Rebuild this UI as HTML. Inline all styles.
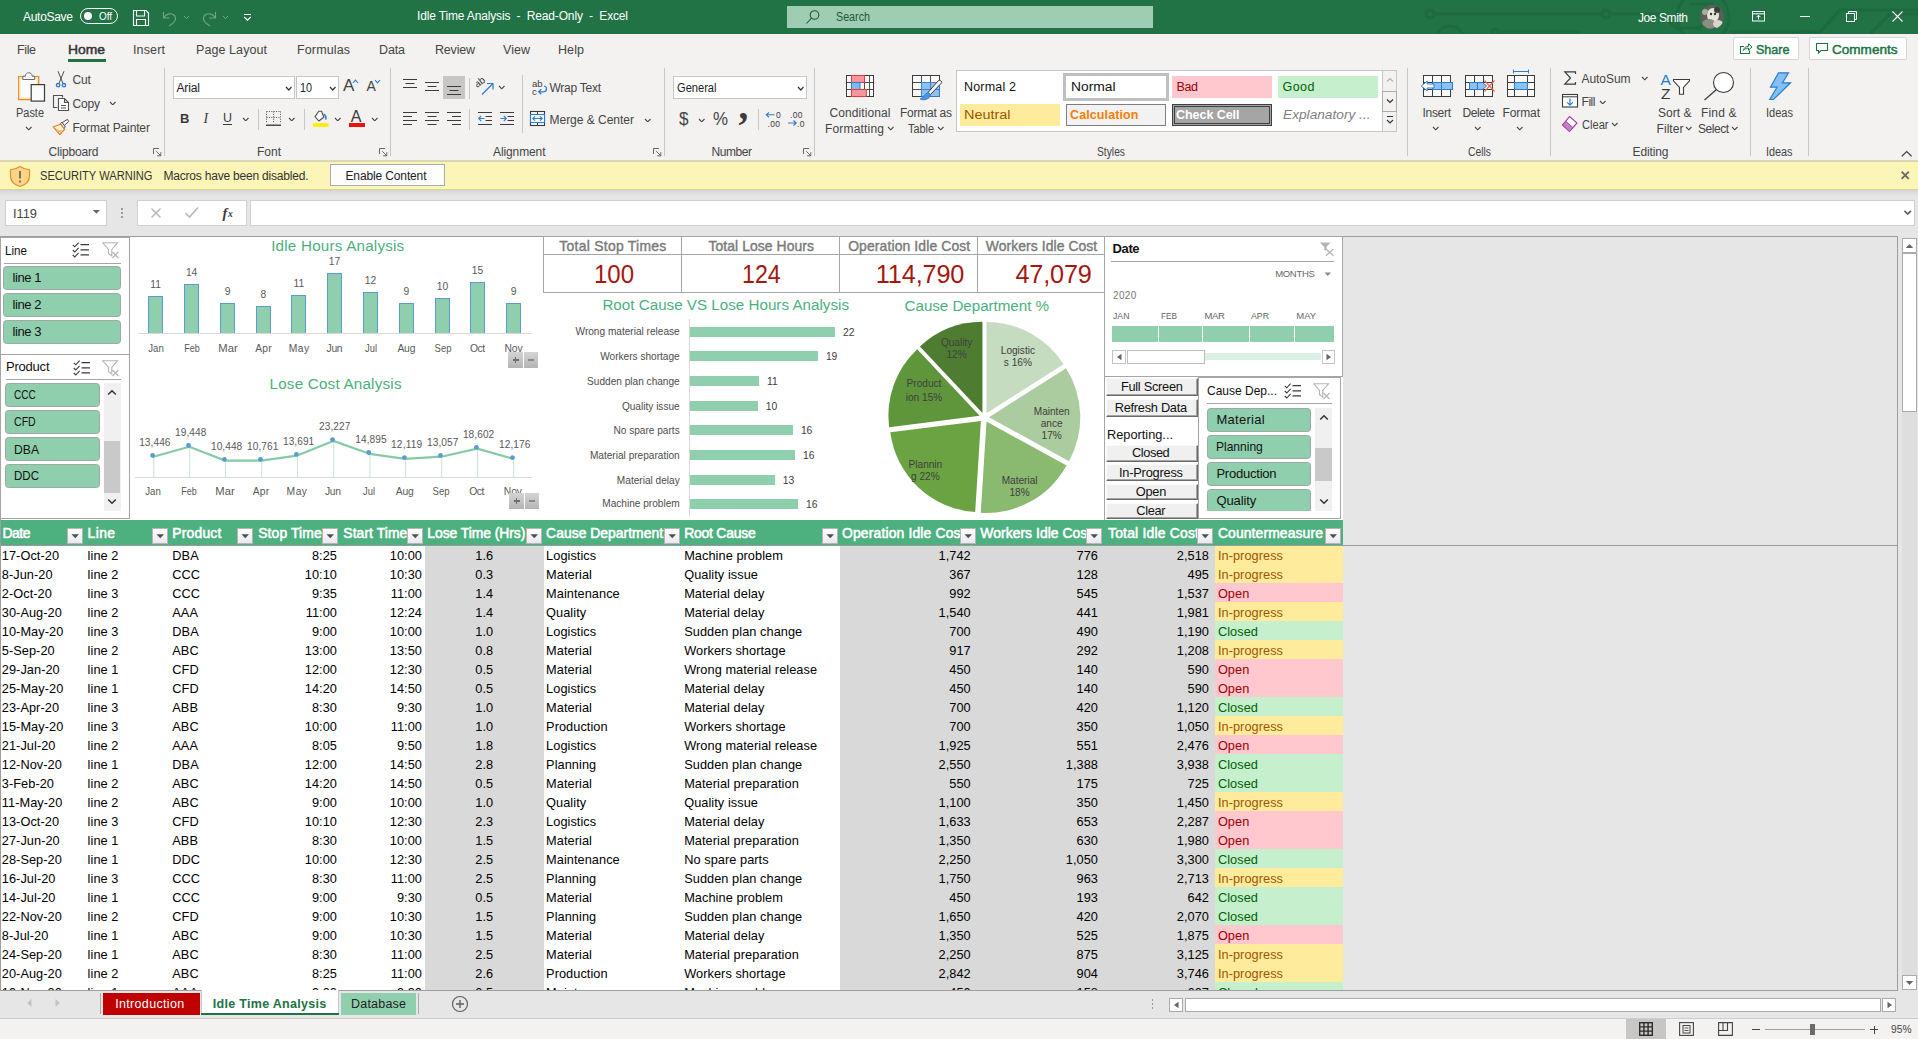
<!DOCTYPE html>
<html><head><meta charset="utf-8"><title>Idle Time Analysis - Excel</title><style>
html,body{margin:0;padding:0;}
body{width:1918px;height:1039px;overflow:hidden;background:#e6e6e6;font-family:"Liberation Sans",sans-serif;position:relative;}
#root{position:absolute;left:0;top:0;width:1918px;height:1039px;overflow:hidden;}
#root div,#root span.t,#root svg{position:absolute;box-sizing:border-box;}
span.t{white-space:pre;}
span.c{font-size:12.75px;line-height:12.75px;letter-spacing:0.06px;}
</style></head><body><div id="root">
<div style="left:0px;top:0px;width:1918px;height:34px;background:#217346;"></div>
<svg style="left:1400px;top:0px;" width="518" height="34" viewBox="0 0 518 34">
<g fill="none" stroke="#1d6a3f" stroke-width="3">
<path d="M30 14 H206"/><circle cx="30" cy="14" r="4" fill="#217346"/><circle cx="206" cy="14" r="4" fill="#217346"/>
<path d="M210 14 H262 L276 28 H300"/>
<circle cx="303" cy="17" r="26"/>
<path d="M290 4 H312 V12 L298 30"/>
<circle cx="50" cy="40" r="14"/><circle cx="95" cy="32" r="3"/><path d="M98 32 H180"/>
<path d="M330 32 H420 L440 10 H518"/><path d="M470 34 L490 14 H518"/>
</g></svg>
<span class="t" style="top:11px;font-size:12px;line-height:12px;color:#fff;letter-spacing:-0.292px;left:23px;">AutoSave</span>
<div style="left:80px;top:8px;width:38px;height:16px;border:1px solid #fff;border-radius:8px;"></div>
<div style="left:84px;top:12px;width:8px;height:8px;background:#fff;border-radius:4px;"></div>
<span class="t" style="top:11px;font-size:11px;line-height:11px;color:#fff;transform:scaleX(0.8975);transform-origin:left center;left:98.5px;">Off</span>
<svg style="left:132px;top:9px;" width="18" height="18" viewBox="0 0 18 18"><path d="M1.5 1.5 H14 L16.5 4 V16.5 H1.5 Z M4.5 1.5 V7 H12.5 V1.5 M4.5 16.5 V10.5 H13.5 V16.5" fill="none" stroke="#fff" stroke-width="1.1"/></svg>
<svg style="left:161px;top:9px;" width="18" height="18" viewBox="0 0 18 18"><path d="M2.5 3 V9 H8.5 M2.8 8.7 C5 4.5 10.5 3.5 13.5 6.5 C16.5 10 13 14 8 17" fill="none" stroke="#6fa688" stroke-width="1.1"/></svg>
<svg style="left:182.5px;top:14.5px;" width="7" height="4.6" viewBox="0 0 7 4.6"><path d="M1 1 L3.5 3.6 L6 1" fill="none" stroke="#6fa688" stroke-width="1"/></svg>
<svg style="left:200px;top:9px;" width="18" height="18" viewBox="0 0 18 18"><path d="M15.5 3 V9 H9.5 M15.2 8.7 C13 4.5 7.5 3.5 4.5 6.5 C1.5 10 5 14 10 17" fill="none" stroke="#6fa688" stroke-width="1.1"/></svg>
<svg style="left:221.5px;top:14.5px;" width="7" height="4.6" viewBox="0 0 7 4.6"><path d="M1 1 L3.5 3.6 L6 1" fill="none" stroke="#6fa688" stroke-width="1"/></svg>
<svg style="left:243px;top:13px;" width="9" height="9" viewBox="0 0 9 9"><path d="M1 1.5 H8 M1.2 4 L4.5 7.2 L7.8 4" fill="none" stroke="#fff" stroke-width="1.1"/></svg>
<span class="t" style="top:10px;font-size:12px;line-height:12px;color:#fff;letter-spacing:-0.156px;left:417px;">Idle Time Analysis  -  Read-Only  -  Excel</span>
<div style="left:787px;top:6px;width:366px;height:22px;background:#9fcdb3;"></div>
<svg style="left:805px;top:9px;" width="16" height="16" viewBox="0 0 16 16"><circle cx="9.5" cy="6" r="4.3" fill="none" stroke="#1e5a38" stroke-width="1.1"/><path d="M6.5 9 L1.5 14.5" stroke="#1e5a38" stroke-width="1.1"/></svg>
<span class="t" style="top:11px;font-size:12px;line-height:12px;color:#1e5a38;transform:scaleX(0.894);transform-origin:left center;left:836px;">Search</span>
<span class="t" style="top:12px;font-size:12px;line-height:12px;color:#fff;letter-spacing:-0.42px;left:1638px;">Joe Smith</span>
<svg style="left:1699px;top:4px;" width="26" height="26" viewBox="0 0 26 26"><defs><clipPath id="av"><circle cx="13" cy="13" r="12"/></clipPath></defs>
<g clip-path="url(#av)"><rect width="26" height="26" fill="#5a5f58"/>
<ellipse cx="14" cy="11" rx="6" ry="7" fill="#e8e4da"/><ellipse cx="10" cy="20" rx="7" ry="5" fill="#8a8f86"/>
<circle cx="18" cy="6" r="3" fill="#3b3f3a"/><circle cx="6" cy="8" r="3" fill="#a9ad9f"/><ellipse cx="19" cy="20" rx="5" ry="4" fill="#d9d5c8"/>
<circle cx="12" cy="10" r="1.2" fill="#333"/><circle cx="16" cy="10" r="1.2" fill="#333"/></g></svg>
<svg style="left:1751px;top:10px;" width="16" height="13" viewBox="0 0 16 13"><rect x="1.5" y="1.5" width="12" height="9.5" fill="none" stroke="#fff" stroke-width="1"/><path d="M1.5 3.8 H13.5 M7.5 9.5 V5.5 M5.5 7.2 L7.5 5.2 L9.5 7.2" fill="none" stroke="#fff" stroke-width="1"/></svg>
<div style="left:1800px;top:16px;width:10px;height:1px;background:#fff;"></div>
<svg style="left:1845px;top:10px;" width="13" height="13" viewBox="0 0 13 13"><rect x="1.5" y="3.5" width="8" height="8" fill="none" stroke="#fff" stroke-width="1"/><path d="M3.5 3.5 V1.5 H11.5 V9.5 H9.5" fill="none" stroke="#fff" stroke-width="1"/></svg>
<svg style="left:1891px;top:10px;" width="13" height="13" viewBox="0 0 13 13"><path d="M1.5 1.5 L11.5 11.5 M11.5 1.5 L1.5 11.5" stroke="#fff" stroke-width="1.1"/></svg>
<div style="left:0px;top:34px;width:1918px;height:127px;background:#f3f2f1;"></div>
<span class="t" style="top:44px;font-size:12.5px;line-height:12.5px;color:#444;letter-spacing:-0.385px;left:17px;">File</span>
<span class="t" style="top:44px;font-size:12.5px;line-height:12.5px;color:#333;transform:scaleX(1.1097);transform-origin:left center;left:68px;-webkit-text-stroke:0.45px #333;">Home</span>
<span class="t" style="top:44px;font-size:12.5px;line-height:12.5px;color:#444;letter-spacing:0.147px;left:133px;">Insert</span>
<span class="t" style="top:44px;font-size:12.5px;line-height:12.5px;color:#444;letter-spacing:0.08px;left:196px;">Page Layout</span>
<span class="t" style="top:44px;font-size:12.5px;line-height:12.5px;color:#444;letter-spacing:0.129px;left:297px;">Formulas</span>
<span class="t" style="top:44px;font-size:12.5px;line-height:12.5px;color:#444;letter-spacing:-0.135px;left:379px;">Data</span>
<span class="t" style="top:44px;font-size:12.5px;line-height:12.5px;color:#444;letter-spacing:-0.2px;left:435px;">Review</span>
<span class="t" style="top:44px;font-size:12.5px;line-height:12.5px;color:#444;letter-spacing:0.042px;left:503px;">View</span>
<span class="t" style="top:44px;font-size:12.5px;line-height:12.5px;color:#444;letter-spacing:0.094px;left:558px;">Help</span>
<div style="left:68px;top:59px;width:38px;height:3px;background:#217346;"></div>
<div style="left:1733px;top:37px;width:66px;height:23px;background:#fff;border:1px solid #d8d6d4;border-radius:2px;"></div>
<svg style="left:1739px;top:42px;" width="14" height="13" viewBox="0 0 14 13"><path d="M5 4.5 H1.5 V11.5 H10.5 V8.5" fill="none" stroke="#217346" stroke-width="1.1"/><path d="M4.5 8.5 C5 5.5 7 4.2 9.5 4.2 V1.8 L13 5 L9.5 8.2 V6 C7.5 6 5.8 6.6 4.5 8.5 Z" fill="none" stroke="#217346" stroke-width="1"/></svg>
<span class="t" style="top:44px;font-size:12.5px;line-height:12.5px;color:#217346;letter-spacing:0.035px;left:1756px;-webkit-text-stroke:0.45px #217346;">Share</span>
<div style="left:1809px;top:37px;width:98px;height:23px;background:#fff;border:1px solid #d8d6d4;border-radius:2px;"></div>
<svg style="left:1815px;top:42px;" width="14" height="13" viewBox="0 0 14 13"><path d="M1.5 1.5 H12.5 V8.5 H6 L3.5 11 V8.5 H1.5 Z" fill="none" stroke="#217346" stroke-width="1.1"/></svg>
<span class="t" style="top:44px;font-size:12.5px;line-height:12.5px;color:#217346;transform:scaleX(1.0838);transform-origin:left center;left:1832px;-webkit-text-stroke:0.45px #217346;">Comments</span>
<div style="left:164px;top:68px;width:1px;height:88px;background:#c8c6c4;"></div>
<div style="left:390px;top:68px;width:1px;height:88px;background:#c8c6c4;"></div>
<div style="left:664px;top:68px;width:1px;height:88px;background:#c8c6c4;"></div>
<div style="left:814px;top:68px;width:1px;height:88px;background:#c8c6c4;"></div>
<div style="left:1407px;top:68px;width:1px;height:88px;background:#c8c6c4;"></div>
<div style="left:1550px;top:68px;width:1px;height:88px;background:#c8c6c4;"></div>
<div style="left:1750px;top:68px;width:1px;height:88px;background:#c8c6c4;"></div>
<div style="left:1808px;top:68px;width:1px;height:88px;background:#c8c6c4;"></div>
<span class="t" style="top:146px;font-size:12px;line-height:12px;color:#444;letter-spacing:-0.172px;left:48.5px;">Clipboard</span>
<span class="t" style="top:146px;font-size:12px;line-height:12px;color:#444;letter-spacing:-0.005px;left:257px;">Font</span>
<span class="t" style="top:146px;font-size:12px;line-height:12px;color:#444;letter-spacing:-0.109px;left:493px;">Alignment</span>
<span class="t" style="top:146px;font-size:12px;line-height:12px;color:#444;letter-spacing:-0.438px;left:711.5px;">Number</span>
<span class="t" style="top:146px;font-size:12px;line-height:12px;color:#444;transform:scaleX(0.8566);transform-origin:left center;left:1096.5px;">Styles</span>
<span class="t" style="top:146px;font-size:12px;line-height:12px;color:#444;transform:scaleX(0.8623);transform-origin:left center;left:1467.5px;">Cells</span>
<span class="t" style="top:146px;font-size:12px;line-height:12px;color:#444;letter-spacing:-0.117px;left:1632.5px;">Editing</span>
<span class="t" style="top:146px;font-size:12px;line-height:12px;color:#444;transform:scaleX(0.9026);transform-origin:left center;left:1766px;">Ideas</span>
<svg style="left:153px;top:148px;" width="9" height="9" viewBox="0 0 9 9"><path d="M0.5 6 V0.5 H6 M3.2 3.2 L7.8 7.8 M7.8 4.2 V7.8 H4.2" fill="none" stroke="#666" stroke-width="1"/></svg>
<svg style="left:379px;top:148px;" width="9" height="9" viewBox="0 0 9 9"><path d="M0.5 6 V0.5 H6 M3.2 3.2 L7.8 7.8 M7.8 4.2 V7.8 H4.2" fill="none" stroke="#666" stroke-width="1"/></svg>
<svg style="left:653px;top:148px;" width="9" height="9" viewBox="0 0 9 9"><path d="M0.5 6 V0.5 H6 M3.2 3.2 L7.8 7.8 M7.8 4.2 V7.8 H4.2" fill="none" stroke="#666" stroke-width="1"/></svg>
<svg style="left:803px;top:148px;" width="9" height="9" viewBox="0 0 9 9"><path d="M0.5 6 V0.5 H6 M3.2 3.2 L7.8 7.8 M7.8 4.2 V7.8 H4.2" fill="none" stroke="#666" stroke-width="1"/></svg>
<svg style="left:1900px;top:150px;" width="13" height="8" viewBox="0 0 13 8"><path d="M1.8 6.3 L6.7 1.5 L11.6 6.3" fill="none" stroke="#444" stroke-width="1.2"/></svg>
<svg style="left:16px;top:70px;" width="31" height="34" viewBox="0 0 31 34"><rect x="2.7" y="6.6" width="20" height="23" fill="#fbfbfb" stroke="#e8912d" stroke-width="1.3"/>
<rect x="4" y="7.9" width="17.4" height="20.4" fill="none" stroke="#fbe2b0" stroke-width="1.2"/>
<path d="M6.8 9.5 V6.2 H9.3 C9.3 1.6 16.2 1.6 16.2 6.2 H18.7 V9.5 Z" fill="#f8f8f8" stroke="#6a6a6a" stroke-width="1"/>
<rect x="15.2" y="14.6" width="13.3" height="16.5" fill="#fbfbfb" stroke="#3b3b3b" stroke-width="1.2"/></svg>
<span class="t" style="top:107px;font-size:12px;line-height:12px;color:#444;transform:scaleX(0.9124);transform-origin:left center;left:15.5px;">Paste</span>
<svg style="left:24.5px;top:126px;" width="7.5" height="4.8" viewBox="0 0 7.5 4.8"><path d="M1 1 L3.75 3.8 L6.5 1" fill="none" stroke="#444" stroke-width="1.1"/></svg>
<svg style="left:54px;top:70px;" width="14" height="19" viewBox="0 0 14 19"><path d="M4 1.2 L8.8 13 M10 1.2 L5.2 13" stroke="#505050" stroke-width="1" fill="none"/>
<circle cx="4.1" cy="15.2" r="1.7" fill="none" stroke="#2b7cd3" stroke-width="1.3"/><circle cx="9.9" cy="15.2" r="1.7" fill="none" stroke="#2b7cd3" stroke-width="1.3"/></svg>
<span class="t" style="top:74px;font-size:12px;line-height:12px;color:#444;letter-spacing:-0.094px;left:72.4px;">Cut</span>
<svg style="left:52px;top:94px;" width="18" height="18" viewBox="0 0 18 18"><path d="M10.5 3.5 V1.5 H1.5 V13.5 H5.5" fill="none" stroke="#505050" stroke-width="1.1"/>
<path d="M6.5 4.5 H12.5 L16.5 8.5 V16.5 H6.5 Z M12.5 4.5 V8.5 H16.5" fill="#fff" stroke="#505050" stroke-width="1.1"/><path d="M9 11.5 H14 M9 14 H14" stroke="#505050" stroke-width="1"/></svg>
<span class="t" style="top:98px;font-size:12px;line-height:12px;color:#444;letter-spacing:-0.172px;left:72.4px;">Copy</span>
<svg style="left:109.3px;top:100.7px;" width="7.5" height="4.8" viewBox="0 0 7.5 4.8"><path d="M1 1 L3.75 3.8 L6.5 1" fill="none" stroke="#444" stroke-width="1.1"/></svg>
<svg style="left:52px;top:117px;" width="19" height="19" viewBox="0 0 19 19"><path d="M9.3 6.2 L15.5 2.3 L16.6 4.5 L11.5 9.3" fill="#f8f8f8" stroke="#505050" stroke-width="1"/>
<path d="M8.2 6.6 L10 5.4 L13.4 10 L11.8 11.4 Z" fill="#f8f8f8" stroke="#505050" stroke-width="1"/>
<path d="M1.3 9.8 L8.6 7.2 L12.6 12.3 L7.8 17.6 Z" fill="#fdf3e6" stroke="#e8801a" stroke-width="1.2" stroke-linejoin="round"/>
<path d="M3.5 11.5 L9 15.5 M5 14.5 L10.5 13.5" stroke="#f0a050" stroke-width="0.9"/></svg>
<span class="t" style="top:122px;font-size:12px;line-height:12px;color:#444;letter-spacing:-0.143px;left:72.4px;">Format Painter</span>
<div style="left:173px;top:76px;width:122px;height:23px;background:#fff;border:1px solid #c6c6c6;"></div>
<span class="t" style="top:82px;font-size:12px;line-height:12px;color:#222;letter-spacing:-0.129px;left:176.5px;">Arial</span>
<svg style="left:285px;top:85.5px;" width="7.5" height="5" viewBox="0 0 7.5 5"><path d="M1 1 L3.75 4 L6.5 1" fill="none" stroke="#333" stroke-width="1.2"/></svg>
<div style="left:296px;top:76px;width:43px;height:23px;background:#fff;border:1px solid #c6c6c6;"></div>
<span class="t" style="top:82px;font-size:12px;line-height:12px;color:#222;transform:scaleX(0.8982);transform-origin:left center;left:299.5px;">10</span>
<svg style="left:328.5px;top:85.5px;" width="7.5" height="5" viewBox="0 0 7.5 5"><path d="M1 1 L3.75 4 L6.5 1" fill="none" stroke="#333" stroke-width="1.2"/></svg>
<span class="t" style="top:77px;font-size:17px;line-height:17px;color:#444;left:343px;">A</span>
<svg style="left:352px;top:78.5px;" width="7" height="5" viewBox="0 0 7 5"><path d="M1 4 L3.5 1.2 L6 4" fill="none" stroke="#2b7cd3" stroke-width="1.1"/></svg>
<span class="t" style="top:79px;font-size:14px;line-height:14px;color:#444;left:366.5px;">A</span>
<svg style="left:374px;top:78.5px;" width="7" height="5" viewBox="0 0 7 5"><path d="M1 1 L3.5 3.8 L6 1" fill="none" stroke="#2b7cd3" stroke-width="1.1"/></svg>
<span class="t" style="top:112px;font-size:13px;line-height:13px;color:#3b3b3b;font-weight:bold;left:180px;">B</span>
<span class="t" style="top:112px;font-size:13px;line-height:13px;color:#3b3b3b;font-style:italic;left:203.5px;font-family:'Liberation Serif',serif;font-size:14px;">I</span>
<span class="t" style="top:112px;font-size:12.5px;line-height:12.5px;color:#3b3b3b;left:223px;">U</span>
<div style="left:223px;top:124px;width:9px;height:1px;background:#3b3b3b;"></div>
<svg style="left:242px;top:116.5px;" width="7.5" height="4.8" viewBox="0 0 7.5 4.8"><path d="M1 1 L3.75 3.8 L6.5 1" fill="none" stroke="#444" stroke-width="1.1"/></svg>
<div style="left:258px;top:109px;width:1px;height:21px;background:#c8c6c4;"></div>
<svg style="left:265px;top:110px;" width="17" height="17" viewBox="0 0 17 17"><path d="M1.5 1.5 H15.5 M1.5 1.5 V13 M15.5 1.5 V13 M8.5 1.5 V13 M1.5 7.5 H15.5" fill="none" stroke="#555" stroke-width="1" stroke-dasharray="1 1.4"/><path d="M1 15.2 H16" stroke="#222" stroke-width="1.2"/></svg>
<svg style="left:288px;top:116.5px;" width="7.5" height="4.8" viewBox="0 0 7.5 4.8"><path d="M1 1 L3.75 3.8 L6.5 1" fill="none" stroke="#444" stroke-width="1.1"/></svg>
<div style="left:304px;top:109px;width:1px;height:21px;background:#c8c6c4;"></div>
<svg style="left:312px;top:109px;" width="17" height="18" viewBox="0 0 17 18"><path d="M3 7.6 L6.8 2.2 H9.6 L11.8 8.2 L6.8 12 Z" fill="#fbfbfb" stroke="#505050" stroke-width="1.1" stroke-linejoin="round"/>
<path d="M11.6 5.2 C13.8 6.2 14.2 8.5 13.6 10.6" fill="none" stroke="#2b7cd3" stroke-width="1.5"/><rect x="1" y="14.2" width="15.5" height="3.6" fill="#ffee00"/></svg>
<svg style="left:334px;top:116.5px;" width="7.5" height="4.8" viewBox="0 0 7.5 4.8"><path d="M1 1 L3.75 3.8 L6.5 1" fill="none" stroke="#444" stroke-width="1.1"/></svg>
<span class="t" style="top:109px;font-size:16px;line-height:16px;color:#3b3b3b;left:350.8px;">A</span>
<div style="left:349px;top:123.2px;width:16px;height:3.6px;background:#ee1111;"></div>
<svg style="left:371px;top:116.5px;" width="7.5" height="4.8" viewBox="0 0 7.5 4.8"><path d="M1 1 L3.75 3.8 L6.5 1" fill="none" stroke="#444" stroke-width="1.1"/></svg>
<svg style="left:403px;top:76px;" width="14" height="22" viewBox="0 0 14 22"><rect x="0.0" y="3" width="14" height="1" fill="#3b3b3b"/><rect x="2.5" y="7" width="9" height="1" fill="#3b3b3b"/><rect x="0.0" y="11" width="14" height="1" fill="#3b3b3b"/></svg>
<svg style="left:425px;top:76px;" width="14" height="22" viewBox="0 0 14 22"><rect x="0.0" y="6" width="14" height="1" fill="#3b3b3b"/><rect x="2.5" y="10" width="9" height="1" fill="#3b3b3b"/><rect x="0.0" y="14" width="14" height="1" fill="#3b3b3b"/></svg>
<div style="left:443px;top:76px;width:22px;height:23px;background:#c8c6c4;"></div>
<svg style="left:447px;top:76px;" width="14" height="22" viewBox="0 0 14 22"><rect x="0.0" y="10" width="14" height="1" fill="#3b3b3b"/><rect x="2.5" y="14" width="9" height="1" fill="#3b3b3b"/><rect x="0.0" y="18" width="14" height="1" fill="#3b3b3b"/></svg>
<div style="left:469px;top:78px;width:1px;height:21px;background:#c8c6c4;"></div>
<svg style="left:476px;top:76px;" width="19" height="21" viewBox="0 0 19 21"><text x="0" y="9" font-size="10" font-family="Liberation Sans" fill="#3b3b3b" transform="rotate(-36 5 9)">ab</text>
<path d="M6 18.5 L16.5 8 M11 7.5 H17 V13.5" fill="none" stroke="#2b7cd3" stroke-width="1.2"/></svg>
<svg style="left:497.5px;top:85px;" width="7.5" height="4.8" viewBox="0 0 7.5 4.8"><path d="M1 1 L3.75 3.8 L6.5 1" fill="none" stroke="#444" stroke-width="1.1"/></svg>
<div style="left:522px;top:75px;width:1px;height:58px;background:#c8c6c4;"></div>
<svg style="left:531px;top:78px;" width="17" height="18" viewBox="0 0 17 18"><text x="1" y="8.5" font-size="9.5" font-family="Liberation Sans" fill="#3b3b3b">ab</text><text x="1" y="16.5" font-size="9.5" font-family="Liberation Sans" fill="#3b3b3b">c</text>
<path d="M13 8 C16.5 8.5 16.5 13.5 12.5 13.8 H8 M10.3 11.3 L7.6 13.8 L10.3 16.3" fill="none" stroke="#2b7cd3" stroke-width="1.2"/></svg>
<span class="t" style="top:82px;font-size:12px;line-height:12px;color:#444;letter-spacing:-0.26px;left:549.5px;">Wrap Text</span>
<svg style="left:403px;top:110px;" width="14" height="17" viewBox="0 0 14 17"><rect x="0" y="2" width="14" height="1" fill="#3b3b3b"/><rect x="0" y="6" width="9" height="1" fill="#3b3b3b"/><rect x="0" y="10" width="14" height="1" fill="#3b3b3b"/><rect x="0" y="14" width="9" height="1" fill="#3b3b3b"/></svg>
<svg style="left:425px;top:110px;" width="14" height="17" viewBox="0 0 14 17"><rect x="0.0" y="2" width="14" height="1" fill="#3b3b3b"/><rect x="2.5" y="6" width="9" height="1" fill="#3b3b3b"/><rect x="0.0" y="10" width="14" height="1" fill="#3b3b3b"/><rect x="2.5" y="14" width="9" height="1" fill="#3b3b3b"/></svg>
<svg style="left:447px;top:110px;" width="14" height="17" viewBox="0 0 14 17"><rect x="0" y="2" width="14" height="1" fill="#3b3b3b"/><rect x="5" y="6" width="9" height="1" fill="#3b3b3b"/><rect x="0" y="10" width="14" height="1" fill="#3b3b3b"/><rect x="5" y="14" width="9" height="1" fill="#3b3b3b"/></svg>
<div style="left:469px;top:109px;width:1px;height:21px;background:#c8c6c4;"></div>
<svg style="left:477.5px;top:110px;" width="15" height="17" viewBox="0 0 15 17"><rect x="0" y="2" width="14" height="1" fill="#3b3b3b"/><rect x="0" y="14" width="14" height="1" fill="#3b3b3b"/><rect x="7.5" y="6" width="6.5" height="1" fill="#3b3b3b"/><rect x="7.5" y="10" width="6.5" height="1" fill="#3b3b3b"/><path d="M6.5 8.5 H0.8 M3.2 5.9 L0.7 8.5 L3.2 11.1" fill="none" stroke="#2b7cd3" stroke-width="1.1"/></svg>
<svg style="left:499.5px;top:110px;" width="15" height="17" viewBox="0 0 15 17"><rect x="0" y="2" width="14" height="1" fill="#3b3b3b"/><rect x="0" y="14" width="14" height="1" fill="#3b3b3b"/><rect x="7.5" y="6" width="6.5" height="1" fill="#3b3b3b"/><rect x="7.5" y="10" width="6.5" height="1" fill="#3b3b3b"/><path d="M0.5 8.5 H6.2 M3.8 5.9 L6.3 8.5 L3.8 11.1" fill="none" stroke="#2b7cd3" stroke-width="1.1"/></svg>
<svg style="left:529px;top:110px;" width="17" height="17" viewBox="0 0 17 17"><rect x="1.5" y="1.5" width="14" height="14" fill="#fbfbfb" stroke="#3b3b3b" stroke-width="1.1"/><path d="M8.5 1.5 V4.5 M8.5 12.5 V15.5" stroke="#3b3b3b" stroke-width="1"/>
<rect x="1.5" y="4.5" width="14" height="8" fill="#fbfbfb" stroke="#2b7cd3" stroke-width="1.1"/><path d="M4 8.5 H13 M6 6.4 L3.8 8.5 L6 10.6 M11 6.4 L13.2 8.5 L11 10.6" fill="none" stroke="#2b7cd3" stroke-width="1.1"/></svg>
<span class="t" style="top:114px;font-size:12px;line-height:12px;color:#444;letter-spacing:-0.016px;left:549.5px;">Merge &amp; Center</span>
<svg style="left:644px;top:117.5px;" width="7.5" height="4.8" viewBox="0 0 7.5 4.8"><path d="M1 1 L3.75 3.8 L6.5 1" fill="none" stroke="#444" stroke-width="1.1"/></svg>
<div style="left:673px;top:76px;width:134px;height:23px;background:#fff;border:1px solid #c6c6c6;"></div>
<span class="t" style="top:82px;font-size:12px;line-height:12px;color:#222;transform:scaleX(0.925);transform-origin:left center;left:676.5px;">General</span>
<svg style="left:796.5px;top:85.5px;" width="7.5" height="5" viewBox="0 0 7.5 5"><path d="M1 1 L3.75 4 L6.5 1" fill="none" stroke="#333" stroke-width="1.2"/></svg>
<span class="t" style="top:111px;font-size:17.5px;line-height:17.5px;color:#444;transform:scaleX(0.9759);transform-origin:left center;left:679px;">$</span>
<svg style="left:697.5px;top:117.5px;" width="7.5" height="4.8" viewBox="0 0 7.5 4.8"><path d="M1 1 L3.75 3.8 L6.5 1" fill="none" stroke="#444" stroke-width="1.1"/></svg>
<span class="t" style="top:111px;font-size:17.5px;line-height:17.5px;color:#444;transform:scaleX(0.9639);transform-origin:left center;left:713px;">%</span>
<span class="t" style="top:86px;font-size:39px;line-height:39px;color:#3b3b3b;font-weight:bold;left:738.5px;font-family:'Liberation Serif',serif;">,</span>
<div style="left:758px;top:109px;width:1px;height:21px;background:#c8c6c4;"></div>
<svg style="left:765px;top:110px;" width="18" height="18" viewBox="0 0 18 18"><text x="11" y="8" font-size="8.5" font-family="Liberation Sans" fill="#3b3b3b">0</text><text x="2.5" y="16.5" font-size="8.5" font-family="Liberation Sans" fill="#3b3b3b" letter-spacing="0.3">.00</text>
<path d="M9.5 4.8 H1.5 M4 2.3 L1.3 4.8 L4 7.3" fill="none" stroke="#2b7cd3" stroke-width="1.1"/></svg>
<svg style="left:787px;top:110px;" width="18" height="18" viewBox="0 0 18 18"><text x="3" y="8" font-size="8.5" font-family="Liberation Sans" fill="#3b3b3b" letter-spacing="0.3">.00</text><text x="10" y="16.5" font-size="8.5" font-family="Liberation Sans" fill="#3b3b3b" letter-spacing="0.3">.0</text>
<path d="M1 13 H9 M6.5 10.5 L9.2 13 L6.5 15.5" fill="none" stroke="#2b7cd3" stroke-width="1.1"/></svg>
<svg style="left:845px;top:74px;" width="30" height="24" viewBox="0 0 30 24"><rect x="1.5" y="1.5" width="27" height="21" fill="#fbfbfb" stroke="#3b3b3b" stroke-width="1"/>
<path d="M6.5 1.5 V22.5 M19.5 1.5 V22.5 M24.5 1.5 V22.5 M1.5 8.5 H28.5 M1.5 15.5 H28.5" stroke="#3b3b3b" stroke-width="0.9" fill="none"/>
<rect x="6.5" y="1.5" width="13" height="7" fill="#f7979d" stroke="#e23d3d" stroke-width="1"/><rect x="6.5" y="8.5" width="8.5" height="7" fill="#7fbaec" stroke="#2b7cd3" stroke-width="1"/><rect x="6.5" y="15.5" width="14.8" height="7" fill="#f7979d" stroke="#e23d3d" stroke-width="1"/></svg>
<span class="t" style="top:107px;font-size:12px;line-height:12px;color:#444;letter-spacing:0.095px;left:829.5px;">Conditional</span>
<span class="t" style="top:123px;font-size:12px;line-height:12px;color:#444;letter-spacing:0.182px;left:825px;">Formatting</span>
<svg style="left:887px;top:126px;" width="7.5" height="4.8" viewBox="0 0 7.5 4.8"><path d="M1 1 L3.75 3.8 L6.5 1" fill="none" stroke="#444" stroke-width="1.1"/></svg>
<svg style="left:911px;top:74px;" width="33" height="30" viewBox="0 0 33 30"><rect x="1.5" y="1.5" width="27" height="21" fill="#fbfbfb" stroke="#3b3b3b" stroke-width="1"/>
<rect x="10.5" y="8.5" width="18" height="14" fill="#8ec1f0"/>
<path d="M10.5 1.5 V8.5 M19.5 1.5 V8.5 M1.5 8.5 H10.5 M1.5 15.5 H10.5" stroke="#3b3b3b" stroke-width="0.9" fill="none"/>
<path d="M10.5 8.5 H28.5 M10.5 15.5 H28.5 M10.5 8.5 V22.5 M19.5 8.5 V22.5 M28.5 8.5 V22.5 M10.5 22.5 H28.5" stroke="#2b7cd3" stroke-width="0.9" fill="none"/>
<path d="M30.3 9.2 L19.5 20.5 L17 18.5 L27.2 6.8 C28.8 5.3 31.8 7.6 30.3 9.2 Z" fill="#f3f2f1" stroke="#3b3b3b" stroke-width="1"/>
<path d="M16.8 18.3 L19.7 20.7 C19 24.8 13.5 27.3 9 25 C12 24 13 20.8 16.8 18.3 Z" fill="#4a94de" stroke="#2b7cd3" stroke-width="0.8"/></svg>
<span class="t" style="top:107px;font-size:12px;line-height:12px;color:#444;letter-spacing:-0.252px;left:900px;">Format as</span>
<span class="t" style="top:123px;font-size:12px;line-height:12px;color:#444;transform:scaleX(0.9063);transform-origin:left center;left:907.5px;">Table</span>
<svg style="left:937px;top:126px;" width="7.5" height="4.8" viewBox="0 0 7.5 4.8"><path d="M1 1 L3.75 3.8 L6.5 1" fill="none" stroke="#444" stroke-width="1.1"/></svg>
<div style="left:956px;top:70px;width:441px;height:62px;background:#fff;border:1px solid #c6c6c6;"></div>
<span class="t" style="top:81px;font-size:12.5px;line-height:12.5px;color:#111;letter-spacing:0.183px;left:964px;">Normal 2</span>
<div style="left:1063px;top:73px;width:106px;height:28px;background:#fff;border:3px solid #c0c0c0;"></div>
<span class="t" style="top:81px;font-size:12.5px;line-height:12.5px;color:#111;transform:scaleX(1.1043);transform-origin:left center;left:1070.5px;">Normal</span>
<div style="left:1172px;top:76px;width:100px;height:22px;background:#ffc7ce;"></div>
<span class="t" style="top:81px;font-size:12.5px;line-height:12.5px;color:#9c0006;letter-spacing:-0.375px;left:1176.5px;">Bad</span>
<div style="left:1278px;top:76px;width:100px;height:22px;background:#c6efce;"></div>
<span class="t" style="top:81px;font-size:12.5px;line-height:12.5px;color:#006100;letter-spacing:0.469px;left:1282.5px;">Good</span>
<div style="left:960px;top:104px;width:100px;height:22px;background:#ffeb9c;"></div>
<span class="t" style="top:109px;font-size:12.5px;line-height:12.5px;color:#9c5700;transform:scaleX(1.1539);transform-origin:left center;left:964px;">Neutral</span>
<div style="left:1066px;top:104px;width:100px;height:22px;background:#f2f2f2;border:1px solid #7f7f7f;"></div>
<span class="t" style="top:109px;font-size:12.5px;line-height:12.5px;color:#fa7d00;font-weight:bold;letter-spacing:0.113px;left:1070px;">Calculation</span>
<div style="left:1172px;top:104px;width:100px;height:22px;background:#a5a5a5;border:3px double #3f3f3f;"></div>
<span class="t" style="top:109px;font-size:12.5px;line-height:12.5px;color:#fff;font-weight:bold;letter-spacing:-0.047px;left:1176px;">Check Cell</span>
<span class="t" style="top:109px;font-size:12.5px;line-height:12.5px;color:#7f7f7f;font-style:italic;transform:scaleX(1.095);transform-origin:left center;left:1282.5px;">Explanatory ...</span>
<div style="left:1382px;top:70px;width:15px;height:62px;background:#f3f2f1;border:1px solid #c6c6c6;"></div>
<div style="left:1382px;top:91px;width:15px;height:21px;background:#f3f2f1;border:1px solid #ababab;"></div>
<svg style="left:1386px;top:77px;" width="8" height="6" viewBox="0 0 8 6"><path d="M1 4.5 L4 1.5 L7 4.5" fill="none" stroke="#b0b0b0" stroke-width="1.1"/></svg>
<svg style="left:1386px;top:98px;" width="8" height="6" viewBox="0 0 8 6"><path d="M1 1.5 L4 4.5 L7 1.5" fill="none" stroke="#333" stroke-width="1.2"/></svg>
<svg style="left:1386px;top:115px;" width="8" height="10" viewBox="0 0 8 10"><path d="M1 1.5 H7 M1 5 L4 8 L7 5" fill="none" stroke="#333" stroke-width="1.1"/></svg>
<svg style="left:1420px;top:74px;" width="35" height="24" viewBox="0 0 35 24"><rect x="3.5" y="1.5" width="27" height="21" fill="#fbfbfb" stroke="#3b3b3b" stroke-width="1"/><path d="M3.5 8.5 H30.5 M3.5 15.5 H30.5 M12.5 1.5 V22.5 M21.5 1.5 V22.5" stroke="#3b3b3b" stroke-width="1"/><rect x="12.5" y="8.5" width="20" height="7" fill="#8ec1f0" stroke="#2b7cd3" stroke-width="1"/><path d="M21.5 8.5 V15.5" stroke="#2b7cd3" stroke-width="1"/>
<path d="M14 10 H7.2 V7.2 L1.2 12 L7.2 16.8 V14 H14 Z" fill="#fbfbfb" stroke="#2b7cd3" stroke-width="1"/></svg>
<span class="t" style="top:107px;font-size:12px;line-height:12px;color:#444;letter-spacing:-0.303px;left:1422.5px;">Insert</span>
<svg style="left:1432px;top:126px;" width="7.5" height="4.8" viewBox="0 0 7.5 4.8"><path d="M1 1 L3.75 3.8 L6.5 1" fill="none" stroke="#444" stroke-width="1.1"/></svg>
<svg style="left:1462px;top:74px;" width="35" height="24" viewBox="0 0 35 24"><rect x="3.5" y="1.5" width="27" height="21" fill="#fbfbfb" stroke="#3b3b3b" stroke-width="1"/><path d="M3.5 8.5 H30.5 M3.5 15.5 H30.5 M12.5 1.5 V22.5 M21.5 1.5 V22.5" stroke="#3b3b3b" stroke-width="1"/><path d="M7.5 8.5 H20.5 L24.5 12 L20.5 15.5 H7.5 Z" fill="#8ec1f0" stroke="#2b7cd3" stroke-width="1"/><path d="M15.5 8.5 V15.5" stroke="#2b7cd3" stroke-width="1"/>
<path d="M22.5 6.5 L32.5 17.5 M32.5 6.5 L22.5 17.5" stroke="#f0694f" stroke-width="1.2"/></svg>
<span class="t" style="top:107px;font-size:12px;line-height:12px;color:#444;letter-spacing:-0.438px;left:1462.5px;">Delete</span>
<svg style="left:1474px;top:126px;" width="7.5" height="4.8" viewBox="0 0 7.5 4.8"><path d="M1 1 L3.75 3.8 L6.5 1" fill="none" stroke="#444" stroke-width="1.1"/></svg>
<svg style="left:1505px;top:69px;" width="32" height="29" viewBox="0 0 32 29"><rect x="2.5" y="6.5" width="27" height="21" fill="#fbfbfb" stroke="#3b3b3b" stroke-width="1"/><path d="M2.5 13.5 H29.5 M2.5 20.5 H29.5 M9.5 6.5 V27.5 M22.5 6.5 V27.5" stroke="#3b3b3b" stroke-width="1"/>
<rect x="9.5" y="13.5" width="13" height="7" fill="#8ec1f0" stroke="#2b7cd3" stroke-width="1"/><path d="M8.5 2.5 H23.5 M8.5 0.5 V4.5 M23.5 0.5 V4.5" stroke="#2b7cd3" stroke-width="1"/></svg>
<span class="t" style="top:107px;font-size:12px;line-height:12px;color:#444;letter-spacing:-0.103px;left:1502.5px;">Format</span>
<svg style="left:1516px;top:126px;" width="7.5" height="4.8" viewBox="0 0 7.5 4.8"><path d="M1 1 L3.75 3.8 L6.5 1" fill="none" stroke="#444" stroke-width="1.1"/></svg>
<svg style="left:1563px;top:70px;" width="15" height="16" viewBox="0 0 15 16"><path d="M12.5 4 V1.8 H1.8 L7.5 8 L1.8 14.2 H12.5 V12" fill="none" stroke="#3b3b3b" stroke-width="1.2"/></svg>
<span class="t" style="top:73px;font-size:12px;line-height:12px;color:#444;letter-spacing:-0.06px;left:1581.5px;">AutoSum</span>
<svg style="left:1640.5px;top:76px;" width="7.5" height="4.8" viewBox="0 0 7.5 4.8"><path d="M1 1 L3.75 3.8 L6.5 1" fill="none" stroke="#444" stroke-width="1.1"/></svg>
<svg style="left:1561px;top:93px;" width="18" height="16" viewBox="0 0 18 16"><rect x="1.5" y="1.5" width="15" height="12.5" fill="#fff" stroke="#3b3b3b" stroke-width="1.1"/><path d="M1.5 3.8 H16.5" stroke="#3b3b3b" stroke-width="1"/><path d="M9 5.5 V12 M6.2 9.3 L9 12.2 L11.8 9.3" fill="none" stroke="#2b7cd3" stroke-width="1.2"/></svg>
<span class="t" style="top:96px;font-size:12px;line-height:12px;color:#444;letter-spacing:-0.443px;left:1581.5px;">Fill</span>
<svg style="left:1598.5px;top:99.5px;" width="7.5" height="4.8" viewBox="0 0 7.5 4.8"><path d="M1 1 L3.75 3.8 L6.5 1" fill="none" stroke="#444" stroke-width="1.1"/></svg>
<svg style="left:1561px;top:115px;" width="18" height="18" viewBox="0 0 18 18"><path d="M8.5 1.5 L16 8 L8.5 16.5 L1.5 10 Z" fill="#fff" stroke="#a349a4" stroke-width="1.2"/><path d="M4.8 6.3 L12 12.6 L8.5 16.5 L1.5 10 Z" fill="#c77fc8" stroke="#a349a4" stroke-width="1"/></svg>
<span class="t" style="top:119px;font-size:12px;line-height:12px;color:#444;transform:scaleX(0.9237);transform-origin:left center;left:1581.5px;">Clear</span>
<svg style="left:1610.5px;top:122px;" width="7.5" height="4.8" viewBox="0 0 7.5 4.8"><path d="M1 1 L3.75 3.8 L6.5 1" fill="none" stroke="#444" stroke-width="1.1"/></svg>
<svg style="left:1659px;top:70px;" width="32" height="31" viewBox="0 0 32 31"><text x="1.5" y="14.5" font-size="15.5" font-family="Liberation Sans" fill="#2b7cd3">A</text><text x="2" y="28.6" font-size="15.5" font-family="Liberation Sans" fill="#3b3b3b">Z</text>
<path d="M14.5 9.5 H30.5 V10.8 L24.5 17.5 V24.3 H20.5 V17.5 L14.5 10.8 Z" fill="#fbfbfb" stroke="#3b3b3b" stroke-width="1.1"/></svg>
<span class="t" style="top:107px;font-size:12px;line-height:12px;color:#444;letter-spacing:0.028px;left:1658px;">Sort &amp;</span>
<span class="t" style="top:123px;font-size:12px;line-height:12px;color:#444;letter-spacing:0.066px;left:1656.5px;">Filter</span>
<svg style="left:1685px;top:126px;" width="7.5" height="4.8" viewBox="0 0 7.5 4.8"><path d="M1 1 L3.75 3.8 L6.5 1" fill="none" stroke="#444" stroke-width="1.1"/></svg>
<svg style="left:1703px;top:70px;" width="32" height="32" viewBox="0 0 32 32"><circle cx="20.5" cy="12.5" r="10" fill="#fff" stroke="#3b3b3b" stroke-width="1.1"/><path d="M13.5 19.5 L1.5 30" stroke="#3b3b3b" stroke-width="1.2"/></svg>
<span class="t" style="top:107px;font-size:12px;line-height:12px;color:#444;letter-spacing:0.163px;left:1701px;">Find &amp;</span>
<span class="t" style="top:123px;font-size:12px;line-height:12px;color:#444;letter-spacing:-0.472px;left:1698px;">Select</span>
<svg style="left:1731px;top:126px;" width="7.5" height="4.8" viewBox="0 0 7.5 4.8"><path d="M1 1 L3.75 3.8 L6.5 1" fill="none" stroke="#444" stroke-width="1.1"/></svg>
<svg style="left:1767px;top:70px;" width="25" height="32" viewBox="0 0 25 32"><path d="M11.5 2.8 H21.5 L15.5 12.8 H23.5 L6.5 29.5 H2.8 L10 17.2 H3.5 Z" fill="#85c0f2" stroke="#2b7cd3" stroke-width="1.2"/></svg>
<span class="t" style="top:107px;font-size:12px;line-height:12px;color:#444;transform:scaleX(0.9196);transform-origin:left center;left:1766px;">Ideas</span>
<div style="left:0px;top:160px;width:1918px;height:1px;background:#d6d4d2;"></div>
<div style="left:0px;top:161px;width:1918px;height:29px;background:#fcf5b8;"></div>
<div style="left:0px;top:189px;width:1918px;height:1px;background:#d9d68e;"></div>
<div style="left:0px;top:161px;width:1918px;height:1px;background:#dedb96;"></div>
<svg style="left:9px;top:165px;" width="22" height="23" viewBox="0 0 22 23"><path d="M11 1.5 C8 3.5 5 4.5 1.5 4.8 V11 C1.5 16.5 6 20 11 21.5 C16 20 20.5 16.5 20.5 11 V4.8 C17 4.5 14 3.5 11 1.5 Z" fill="#fbd58a" stroke="#e8912d" stroke-width="1.3"/>
<path d="M11 6 V13.5 M11 15.5 V17.5" stroke="#5a4a2a" stroke-width="1.4"/></svg>
<span class="t" style="top:170px;font-size:12px;line-height:12px;color:#333;transform:scaleX(0.9271);transform-origin:left center;left:40px;">SECURITY WARNING</span>
<span class="t" style="top:170px;font-size:12px;line-height:12px;color:#333;letter-spacing:-0.204px;left:163.5px;">Macros have been disabled.</span>
<div style="left:330px;top:164px;width:115px;height:22px;background:#fdfdfd;border:1px solid #ababab;"></div>
<span class="t" style="top:170px;font-size:12px;line-height:12px;color:#222;letter-spacing:-0.133px;left:345.5px;">Enable Content</span>
<svg style="left:1899px;top:169px;" width="12" height="12" viewBox="0 0 12 12"><path d="M2.6 2.6 L9.8 9.8 M9.8 2.6 L2.6 9.8" stroke="#6a6a6a" stroke-width="1.9"/></svg>
<div style="left:0px;top:190px;width:1918px;height:46px;background:#e6e6e6;"></div>
<div style="left:0px;top:190px;width:1918px;height:6px;background:linear-gradient(#d4d4d4,#e6e6e6);"></div>
<div style="left:5px;top:200px;width:102px;height:26px;background:#fff;border:1px solid #d0d0d0;"></div>
<span class="t" style="top:208px;font-size:12px;line-height:12px;color:#444;transform:scaleX(1.0682);transform-origin:left center;left:12.5px;">I119</span>
<svg style="left:92px;top:209px;" width="9" height="6" viewBox="0 0 9 6"><path d="M0.8 1 H8 L4.4 4.8 Z" fill="#666"/></svg>
<div style="left:121px;top:208px;width:2px;height:2px;background:#999;"></div>
<div style="left:121px;top:212px;width:2px;height:2px;background:#999;"></div>
<div style="left:121px;top:216px;width:2px;height:2px;background:#999;"></div>
<div style="left:137px;top:200px;width:110px;height:26px;background:#fff;border:1px solid #d0d0d0;"></div>
<svg style="left:150px;top:207px;" width="12" height="12" viewBox="0 0 12 12"><path d="M1.5 1.5 L10.5 10.5 M10.5 1.5 L1.5 10.5" stroke="#b8b8b8" stroke-width="1.5"/></svg>
<svg style="left:184px;top:206px;" width="16" height="13" viewBox="0 0 16 13"><path d="M1.5 7 L5.5 11 L14 1.5" fill="none" stroke="#b8b8b8" stroke-width="1.6"/></svg>
<span class="t" style="top:206px;font-size:14.5px;line-height:14.5px;color:#3b3b3b;font-weight:bold;font-style:italic;left:222.5px;font-family:'Liberation Serif',serif;">f</span>
<span class="t" style="top:210px;font-size:9.5px;line-height:9.5px;color:#3b3b3b;font-weight:bold;font-style:italic;left:228px;font-family:'Liberation Serif',serif;">x</span>
<div style="left:250px;top:200px;width:1665px;height:26px;background:#fff;border:1px solid #d0d0d0;"></div>
<svg style="left:1902.5px;top:208.5px;" width="10" height="8" viewBox="0 0 10 8"><path d="M1.5 1.8 L4.7 5 L7.9 1.8" fill="none" stroke="#5f5f5f" stroke-width="1.7"/></svg>
<div style="left:0px;top:236px;width:1898px;height:755px;background:#e6e6e6;border:1px solid #9e9e9e;"></div>
<div style="left:1898px;top:236px;width:20px;height:755px;background:#e6e6e6;"></div>
<div style="left:1902px;top:252px;width:15px;height:724px;background:#dedede;"></div>
<div style="left:1902px;top:238px;width:15px;height:15px;background:#fff;border:1px solid #ababab;"></div>
<svg style="left:1905px;top:243px;" width="9" height="6" viewBox="0 0 9 6"><path d="M0.8 5 H8.2 L4.5 1 Z" fill="#666"/></svg>
<div style="left:1902px;top:253px;width:15px;height:159px;background:#fff;border:1px solid #ababab;"></div>
<div style="left:1902px;top:975px;width:15px;height:15px;background:#fff;border:1px solid #ababab;"></div>
<svg style="left:1905px;top:980px;" width="9" height="6" viewBox="0 0 9 6"><path d="M0.8 1 H8.2 L4.5 5 Z" fill="#666"/></svg>
<div style="left:1px;top:237px;width:1342px;height:284px;background:#fff;"></div>
<div style="left:0px;top:237px;width:130px;height:118px;background:#fff;border:1px solid #a6a6a6;"></div>
<span class="t" style="top:244px;font-size:13px;line-height:13px;color:#111;transform:scaleX(0.8951);transform-origin:left center;left:4.5px;">Line</span>
<svg style="left:72px;top:242px;" width="18" height="16" viewBox="0 0 18 16"><path d="M0.8 2.8 L2.8 4.8 L6.6 0.6 M0.8 8 L2.8 10 L6.6 5.8 M0.8 13 L2.8 15 L6.6 10.8" fill="none" stroke="#3b3b3b" stroke-width="1.1"/>
<path d="M8.5 2.6 H17 M8.5 7.8 H17 M8.5 12.9 H17" stroke="#3b3b3b" stroke-width="1.2"/></svg>
<svg style="left:101.5px;top:242px;" width="18" height="18" viewBox="0 0 18 18"><path d="M0.8 0.8 H15.5 L9.8 7.5 V14 L6.5 11.8 V7.5 Z" fill="#fff" stroke="#b4b4b4" stroke-width="1.1"/>
<path d="M10.5 10 L16.5 16 M16.5 10 L10.5 16" stroke="#b4b4b4" stroke-width="1.2"/></svg>
<div style="left:4px;top:263px;width:117px;height:1px;background:#a6a6a6;"></div>
<div style="left:3px;top:266px;width:118px;height:24px;background:#8fcfad;border:1px solid #a0a8a4;border-radius:3.5px;"></div>
<span class="t" style="top:271px;font-size:13px;line-height:13px;color:#111;letter-spacing:-0.416px;left:12.5px;">line 1</span>
<div style="left:3px;top:293px;width:118px;height:24px;background:#8fcfad;border:1px solid #a0a8a4;border-radius:3.5px;"></div>
<span class="t" style="top:298px;font-size:13px;line-height:13px;color:#111;letter-spacing:-0.416px;left:12.5px;">line 2</span>
<div style="left:3px;top:320px;width:118px;height:24px;background:#8fcfad;border:1px solid #a0a8a4;border-radius:3.5px;"></div>
<span class="t" style="top:325px;font-size:13px;line-height:13px;color:#111;letter-spacing:-0.416px;left:12.5px;">line 3</span>
<div style="left:0px;top:354px;width:130px;height:165px;background:#fff;border:1px solid #a6a6a6;"></div>
<span class="t" style="top:360px;font-size:13px;line-height:13px;color:#111;letter-spacing:-0.219px;left:6px;">Product</span>
<svg style="left:72.5px;top:359.5px;" width="18" height="16" viewBox="0 0 18 16"><path d="M0.8 2.8 L2.8 4.8 L6.6 0.6 M0.8 8 L2.8 10 L6.6 5.8 M0.8 13 L2.8 15 L6.6 10.8" fill="none" stroke="#3b3b3b" stroke-width="1.1"/>
<path d="M8.5 2.6 H17 M8.5 7.8 H17 M8.5 12.9 H17" stroke="#3b3b3b" stroke-width="1.2"/></svg>
<svg style="left:101.5px;top:359.5px;" width="18" height="18" viewBox="0 0 18 18"><path d="M0.8 0.8 H15.5 L9.8 7.5 V14 L6.5 11.8 V7.5 Z" fill="#fff" stroke="#b4b4b4" stroke-width="1.1"/>
<path d="M10.5 10 L16.5 16 M16.5 10 L10.5 16" stroke="#b4b4b4" stroke-width="1.2"/></svg>
<div style="left:6px;top:379px;width:115px;height:1px;background:#a6a6a6;"></div>
<div style="left:5px;top:383px;width:95px;height:24px;background:#8fcfad;border:1px solid #a0a8a4;border-radius:3.5px;"></div>
<span class="t" style="top:388px;font-size:13px;line-height:13px;color:#111;transform:scaleX(0.7703);transform-origin:left center;left:14px;">CCC</span>
<div style="left:5px;top:410px;width:95px;height:24px;background:#8fcfad;border:1px solid #a0a8a4;border-radius:3.5px;"></div>
<span class="t" style="top:415px;font-size:13px;line-height:13px;color:#111;transform:scaleX(0.8122);transform-origin:left center;left:14px;">CFD</span>
<div style="left:5px;top:437px;width:95px;height:24px;background:#8fcfad;border:1px solid #a0a8a4;border-radius:3.5px;"></div>
<span class="t" style="top:443px;font-size:13px;line-height:13px;color:#111;transform:scaleX(0.9351);transform-origin:left center;left:14px;">DBA</span>
<div style="left:5px;top:464px;width:95px;height:24px;background:#8fcfad;border:1px solid #a0a8a4;border-radius:3.5px;"></div>
<span class="t" style="top:469px;font-size:13px;line-height:13px;color:#111;transform:scaleX(0.8874);transform-origin:left center;left:14px;">DDC</span>
<div style="left:104px;top:383px;width:17px;height:128px;background:#f0f0f0;"></div>
<svg style="left:107px;top:389px;" width="10" height="7" viewBox="0 0 10 7"><path d="M1.2 5.5 L5 1.7 L8.8 5.5" fill="none" stroke="#333" stroke-width="1.5"/></svg>
<div style="left:104px;top:441px;width:16px;height:52px;background:#c9c9c9;"></div>
<svg style="left:107px;top:498px;" width="10" height="7" viewBox="0 0 10 7"><path d="M1.2 1.5 L5 5.3 L8.8 1.5" fill="none" stroke="#333" stroke-width="1.5"/></svg>
<span class="t" style="top:238px;font-size:15.2px;line-height:15.2px;color:#4cb07e;letter-spacing:0.214px;left:271.2px;">Idle Hours Analysis</span>
<svg style="left:130px;top:236px;" width="415" height="110" viewBox="0 0 415 110"><rect x="18.5" y="60.5" width="14" height="37.0" fill="#8fcfad" stroke="#5b9bd5" stroke-width="1"/><rect x="54.5" y="48.5" width="14" height="49.0" fill="#8fcfad" stroke="#5b9bd5" stroke-width="1"/><rect x="90.5" y="67.5" width="14" height="30.0" fill="#8fcfad" stroke="#5b9bd5" stroke-width="1"/><rect x="126.5" y="70.5" width="14" height="27.0" fill="#8fcfad" stroke="#5b9bd5" stroke-width="1"/><rect x="161.5" y="59.5" width="14" height="38.0" fill="#8fcfad" stroke="#5b9bd5" stroke-width="1"/><rect x="197.5" y="37.5" width="14" height="60.0" fill="#8fcfad" stroke="#5b9bd5" stroke-width="1"/><rect x="233.5" y="56.5" width="14" height="41.0" fill="#8fcfad" stroke="#5b9bd5" stroke-width="1"/><rect x="269.5" y="67.5" width="14" height="30.0" fill="#8fcfad" stroke="#5b9bd5" stroke-width="1"/><rect x="305.5" y="62.5" width="14" height="35.0" fill="#8fcfad" stroke="#5b9bd5" stroke-width="1"/><rect x="340.5" y="46.5" width="14" height="51.0" fill="#8fcfad" stroke="#5b9bd5" stroke-width="1"/><rect x="376.5" y="67.5" width="14" height="30.0" fill="#8fcfad" stroke="#5b9bd5" stroke-width="1"/><rect x="8.5" y="97" width="393" height="1" fill="#d9d9d9"/></svg>
<span class="t" style="top:280px;font-size:10.3px;line-height:10.3px;color:#595959;left:-144.30px;width:600px;text-align:center;">11</span>
<span class="t" style="top:344px;font-size:10.3px;line-height:10.3px;color:#595959;transform:scaleX(0.9332);transform-origin:center center;left:-144.30px;width:600px;text-align:center;">Jan</span>
<span class="t" style="top:268px;font-size:10.3px;line-height:10.3px;color:#595959;left:-108.40px;width:600px;text-align:center;">14</span>
<span class="t" style="top:344px;font-size:10.3px;line-height:10.3px;color:#595959;transform:scaleX(0.8732);transform-origin:center center;left:-108.40px;width:600px;text-align:center;">Feb</span>
<span class="t" style="top:287px;font-size:10.3px;line-height:10.3px;color:#595959;left:-72.50px;width:600px;text-align:center;">9</span>
<span class="t" style="top:344px;font-size:10.3px;line-height:10.3px;color:#595959;transform:scaleX(1.0883);transform-origin:center center;left:-72.50px;width:600px;text-align:center;">Mar</span>
<span class="t" style="top:290px;font-size:10.3px;line-height:10.3px;color:#595959;left:-36.60px;width:600px;text-align:center;">8</span>
<span class="t" style="top:344px;font-size:10.3px;line-height:10.3px;color:#595959;letter-spacing:0.184px;left:-36.51px;width:600px;text-align:center;">Apr</span>
<span class="t" style="top:279px;font-size:10.3px;line-height:10.3px;color:#595959;left:-1.10px;width:600px;text-align:center;">11</span>
<span class="t" style="top:344px;font-size:10.3px;line-height:10.3px;color:#595959;letter-spacing:0.473px;left:-0.86px;width:600px;text-align:center;">May</span>
<span class="t" style="top:257px;font-size:10.3px;line-height:10.3px;color:#595959;left:34.60px;width:600px;text-align:center;">17</span>
<span class="t" style="top:344px;font-size:10.3px;line-height:10.3px;color:#595959;letter-spacing:-0.305px;left:34.45px;width:600px;text-align:center;">Jun</span>
<span class="t" style="top:276px;font-size:10.3px;line-height:10.3px;color:#595959;left:70.50px;width:600px;text-align:center;">12</span>
<span class="t" style="top:344px;font-size:10.3px;line-height:10.3px;color:#595959;transform:scaleX(0.911);transform-origin:center center;left:70.50px;width:600px;text-align:center;">Jul</span>
<span class="t" style="top:287px;font-size:10.3px;line-height:10.3px;color:#595959;left:106.40px;width:600px;text-align:center;">9</span>
<span class="t" style="top:344px;font-size:10.3px;line-height:10.3px;color:#595959;letter-spacing:-0.164px;left:106.32px;width:600px;text-align:center;">Aug</span>
<span class="t" style="top:282px;font-size:10.3px;line-height:10.3px;color:#595959;left:142.50px;width:600px;text-align:center;">10</span>
<span class="t" style="top:344px;font-size:10.3px;line-height:10.3px;color:#595959;transform:scaleX(0.9221);transform-origin:center center;left:142.50px;width:600px;text-align:center;">Sep</span>
<span class="t" style="top:266px;font-size:10.3px;line-height:10.3px;color:#595959;left:177.50px;width:600px;text-align:center;">15</span>
<span class="t" style="top:344px;font-size:10.3px;line-height:10.3px;color:#595959;letter-spacing:-0.466px;left:177.27px;width:600px;text-align:center;">Oct</span>
<span class="t" style="top:287px;font-size:10.3px;line-height:10.3px;color:#595959;left:213.50px;width:600px;text-align:center;">9</span>
<span class="t" style="top:344px;font-size:10.3px;line-height:10.3px;color:#595959;letter-spacing:-0.056px;left:213.47px;width:600px;text-align:center;">Nov</span>
<div style="left:508.2px;top:352px;width:14.5px;height:15.5px;background:linear-gradient(#d4d4d4,#b4b4b4);"></div>
<div style="left:524.0px;top:352px;width:13.6px;height:15.5px;background:linear-gradient(#d4d4d4,#b4b4b4);"></div>
<div style="left:512.5px;top:359px;width:6.4px;height:1.6px;background:#6e6e6e;"></div>
<div style="left:514.9px;top:356.6px;width:1.6px;height:6.4px;background:#6e6e6e;"></div>
<div style="left:527.5px;top:359px;width:6.4px;height:1.6px;background:#8a8a8a;"></div>
<span class="t" style="top:376px;font-size:15.2px;line-height:15.2px;color:#4cb07e;letter-spacing:0.216px;left:269.5px;">Lose Cost Analysis</span>
<svg style="left:130px;top:370px;" width="415" height="120" viewBox="0 0 415 120"><rect x="5" y="107" width="397" height="1" fill="#d9d9d9"/><rect x="23.3" y="85.4" width="1" height="21.6" fill="#c5e6d3"/><rect x="59.2" y="75.5" width="1" height="31.5" fill="#c5e6d3"/><rect x="95.1" y="89.3" width="1" height="17.7" fill="#c5e6d3"/><rect x="131.2" y="89.3" width="1" height="17.7" fill="#c5e6d3"/><rect x="167.1" y="84.3" width="1" height="22.7" fill="#c5e6d3"/><rect x="203.2" y="69.6" width="1" height="37.4" fill="#c5e6d3"/><rect x="239.4" y="82.5" width="1" height="24.5" fill="#c5e6d3"/><rect x="275.1" y="87.6" width="1" height="19.4" fill="#c5e6d3"/><rect x="311.2" y="85.4" width="1" height="21.6" fill="#c5e6d3"/><rect x="347.1" y="77.3" width="1" height="29.7" fill="#c5e6d3"/><rect x="383.2" y="87.6" width="1" height="19.4" fill="#c5e6d3"/><polyline fill="none" stroke="#85cca6" stroke-width="2.2" stroke-linejoin="round" points="23.4,86.7 59.3,76.8 95.2,90.6 131.3,90.6 167.2,85.6 203.3,70.9 239.5,83.8 275.2,88.9 311.3,86.7 347.2,78.6 383.3,88.9"/><circle cx="22.6" cy="85.4" r="2.4" fill="#5b9bd5"/><circle cx="58.5" cy="75.5" r="2.4" fill="#5b9bd5"/><circle cx="94.4" cy="89.3" r="2.4" fill="#5b9bd5"/><circle cx="130.5" cy="89.3" r="2.4" fill="#5b9bd5"/><circle cx="166.4" cy="84.3" r="2.4" fill="#5b9bd5"/><circle cx="202.5" cy="69.6" r="2.4" fill="#5b9bd5"/><circle cx="238.7" cy="82.5" r="2.4" fill="#5b9bd5"/><circle cx="274.4" cy="87.6" r="2.4" fill="#5b9bd5"/><circle cx="310.5" cy="85.4" r="2.4" fill="#5b9bd5"/><circle cx="346.4" cy="77.3" r="2.4" fill="#5b9bd5"/><circle cx="382.5" cy="87.6" r="2.4" fill="#5b9bd5"/></svg>
<span class="t" style="top:438px;font-size:10.1px;line-height:10.1px;color:#595959;letter-spacing:0.085px;left:-145.16px;width:600px;text-align:center;">13,446</span>
<span class="t" style="top:487px;font-size:10.3px;line-height:10.3px;color:#595959;transform:scaleX(0.9332);transform-origin:center center;left:-147.00px;width:600px;text-align:center;">Jan</span>
<span class="t" style="top:428px;font-size:10.1px;line-height:10.1px;color:#595959;letter-spacing:0.085px;left:-109.26px;width:600px;text-align:center;">19,448</span>
<span class="t" style="top:487px;font-size:10.3px;line-height:10.3px;color:#595959;transform:scaleX(0.8732);transform-origin:center center;left:-111.10px;width:600px;text-align:center;">Feb</span>
<span class="t" style="top:442px;font-size:10.1px;line-height:10.1px;color:#595959;letter-spacing:0.085px;left:-73.36px;width:600px;text-align:center;">10,448</span>
<span class="t" style="top:487px;font-size:10.3px;line-height:10.3px;color:#595959;transform:scaleX(1.0883);transform-origin:center center;left:-75.20px;width:600px;text-align:center;">Mar</span>
<span class="t" style="top:442px;font-size:10.1px;line-height:10.1px;color:#595959;letter-spacing:0.085px;left:-37.26px;width:600px;text-align:center;">10,761</span>
<span class="t" style="top:487px;font-size:10.3px;line-height:10.3px;color:#595959;letter-spacing:0.184px;left:-39.01px;width:600px;text-align:center;">Apr</span>
<span class="t" style="top:437px;font-size:10.1px;line-height:10.1px;color:#595959;letter-spacing:0.085px;left:-1.36px;width:600px;text-align:center;">13,691</span>
<span class="t" style="top:487px;font-size:10.3px;line-height:10.3px;color:#595959;letter-spacing:0.473px;left:-2.96px;width:600px;text-align:center;">May</span>
<span class="t" style="top:422px;font-size:10.1px;line-height:10.1px;color:#595959;letter-spacing:0.085px;left:34.74px;width:600px;text-align:center;">23,227</span>
<span class="t" style="top:487px;font-size:10.3px;line-height:10.3px;color:#595959;letter-spacing:-0.305px;left:32.75px;width:600px;text-align:center;">Jun</span>
<span class="t" style="top:435px;font-size:10.1px;line-height:10.1px;color:#595959;letter-spacing:0.085px;left:70.94px;width:600px;text-align:center;">14,895</span>
<span class="t" style="top:487px;font-size:10.3px;line-height:10.3px;color:#595959;transform:scaleX(0.911);transform-origin:center center;left:69.10px;width:600px;text-align:center;">Jul</span>
<span class="t" style="top:440px;font-size:10.1px;line-height:10.1px;color:#595959;letter-spacing:0.235px;left:106.72px;width:600px;text-align:center;">12,119</span>
<span class="t" style="top:487px;font-size:10.3px;line-height:10.3px;color:#595959;letter-spacing:-0.164px;left:104.72px;width:600px;text-align:center;">Aug</span>
<span class="t" style="top:438px;font-size:10.1px;line-height:10.1px;color:#595959;letter-spacing:0.085px;left:142.74px;width:600px;text-align:center;">13,057</span>
<span class="t" style="top:487px;font-size:10.3px;line-height:10.3px;color:#595959;transform:scaleX(0.9221);transform-origin:center center;left:140.90px;width:600px;text-align:center;">Sep</span>
<span class="t" style="top:430px;font-size:10.1px;line-height:10.1px;color:#595959;letter-spacing:0.085px;left:178.64px;width:600px;text-align:center;">18,602</span>
<span class="t" style="top:487px;font-size:10.3px;line-height:10.3px;color:#595959;letter-spacing:-0.466px;left:176.57px;width:600px;text-align:center;">Oct</span>
<span class="t" style="top:440px;font-size:10.1px;line-height:10.1px;color:#595959;letter-spacing:0.085px;left:214.74px;width:600px;text-align:center;">12,176</span>
<span class="t" style="top:487px;font-size:10.3px;line-height:10.3px;color:#595959;letter-spacing:-0.056px;left:212.87px;width:600px;text-align:center;">Nov</span>
<div style="left:509.2px;top:493px;width:14.5px;height:15.5px;background:linear-gradient(#d4d4d4,#b4b4b4);"></div>
<div style="left:525.0px;top:493px;width:13.6px;height:15.5px;background:linear-gradient(#d4d4d4,#b4b4b4);"></div>
<div style="left:513.5px;top:500px;width:6.4px;height:1.6px;background:#6e6e6e;"></div>
<div style="left:515.9px;top:497.6px;width:1.6px;height:6.4px;background:#6e6e6e;"></div>
<div style="left:528.5px;top:500px;width:6.4px;height:1.6px;background:#8a8a8a;"></div>
<div style="left:543px;top:236px;width:562px;height:57px;background:#fff;border:1px solid #a6a6a6;"></div>
<div style="left:543px;top:254px;width:562px;height:1px;background:#a6a6a6;"></div>
<div style="left:681px;top:236px;width:1px;height:57px;background:#a6a6a6;"></div>
<div style="left:839px;top:236px;width:1px;height:57px;background:#a6a6a6;"></div>
<div style="left:977px;top:236px;width:1px;height:57px;background:#a6a6a6;"></div>
<span class="t" style="top:240px;font-size:13.9px;line-height:13.9px;color:#7a7a7a;letter-spacing:0.287px;left:559.3px;-webkit-text-stroke:0.4px #7a7a7a;">Total Stop Times</span>
<span class="t" style="top:240px;font-size:13.9px;line-height:13.9px;color:#7a7a7a;letter-spacing:0.084px;left:708.5px;-webkit-text-stroke:0.4px #7a7a7a;">Total Lose Hours</span>
<span class="t" style="top:240px;font-size:13.9px;line-height:13.9px;color:#7a7a7a;letter-spacing:0.128px;left:848.2px;-webkit-text-stroke:0.4px #7a7a7a;">Operation Idle Cost</span>
<span class="t" style="top:240px;font-size:13.9px;line-height:13.9px;color:#7a7a7a;letter-spacing:0.079px;left:985.8px;-webkit-text-stroke:0.4px #7a7a7a;">Workers Idle Cost</span>
<span class="t" style="top:262px;font-size:25.3px;line-height:25.3px;color:#a5180f;transform:scaleX(0.9498);transform-origin:left center;left:593.5px;">100</span>
<span class="t" style="top:262px;font-size:25.3px;line-height:25.3px;color:#a5180f;transform:scaleX(0.9167);transform-origin:left center;left:742px;">124</span>
<span class="t" style="top:262px;font-size:25.3px;line-height:25.3px;color:#a5180f;letter-spacing:-0.163px;left:875.8px;">114,790</span>
<span class="t" style="top:262px;font-size:25.3px;line-height:25.3px;color:#a5180f;letter-spacing:-0.195px;left:1015.5px;">47,079</span>
<span class="t" style="top:297px;font-size:15.2px;line-height:15.2px;color:#4cb07e;letter-spacing:0.003px;left:602.4px;">Root Cause VS Lose Hours Analysis</span>
<div style="left:689px;top:319px;width:1px;height:197px;background:#d9d9d9;"></div>
<div style="left:690px;top:327px;width:145px;height:9.5px;background:#8fcfad;"></div>
<span class="t" style="top:328px;font-size:10.3px;line-height:10.3px;color:#404040;left:843.1px;">22</span>
<span class="t" style="top:327px;font-size:10.1px;line-height:10.1px;color:#4d4d4d;right:1238.30px;">Wrong material release</span>
<div style="left:690px;top:351px;width:128px;height:9.5px;background:#8fcfad;"></div>
<span class="t" style="top:352px;font-size:10.3px;line-height:10.3px;color:#404040;left:825.9px;">19</span>
<span class="t" style="top:352px;font-size:10.1px;line-height:10.1px;color:#4d4d4d;right:1238.30px;">Workers shortage</span>
<div style="left:690px;top:376px;width:69px;height:9.5px;background:#8fcfad;"></div>
<span class="t" style="top:377px;font-size:10.3px;line-height:10.3px;color:#404040;left:767px;">11</span>
<span class="t" style="top:377px;font-size:10.1px;line-height:10.1px;color:#4d4d4d;right:1238.30px;">Sudden plan change</span>
<div style="left:690px;top:401px;width:68px;height:9.5px;background:#8fcfad;"></div>
<span class="t" style="top:402px;font-size:10.3px;line-height:10.3px;color:#404040;left:765.8px;">10</span>
<span class="t" style="top:402px;font-size:10.1px;line-height:10.1px;color:#4d4d4d;right:1238.30px;">Quality issue</span>
<div style="left:690px;top:425px;width:103px;height:9.5px;background:#8fcfad;"></div>
<span class="t" style="top:426px;font-size:10.3px;line-height:10.3px;color:#404040;left:800.9px;">16</span>
<span class="t" style="top:426px;font-size:10.1px;line-height:10.1px;color:#4d4d4d;right:1238.30px;">No spare parts</span>
<div style="left:690px;top:450px;width:105px;height:9.5px;background:#8fcfad;"></div>
<span class="t" style="top:451px;font-size:10.3px;line-height:10.3px;color:#404040;left:803px;">16</span>
<span class="t" style="top:451px;font-size:10.1px;line-height:10.1px;color:#4d4d4d;right:1238.30px;">Material preparation</span>
<div style="left:690px;top:475px;width:85px;height:9.5px;background:#8fcfad;"></div>
<span class="t" style="top:476px;font-size:10.3px;line-height:10.3px;color:#404040;left:782.8px;">13</span>
<span class="t" style="top:476px;font-size:10.1px;line-height:10.1px;color:#4d4d4d;right:1238.30px;">Material delay</span>
<div style="left:690px;top:499px;width:108px;height:9.5px;background:#8fcfad;"></div>
<span class="t" style="top:500px;font-size:10.3px;line-height:10.3px;color:#404040;left:806px;">16</span>
<span class="t" style="top:499px;font-size:10.1px;line-height:10.1px;color:#4d4d4d;right:1238.30px;">Machine problem</span>
<span class="t" style="top:298px;font-size:15.2px;line-height:15.2px;color:#4cb07e;letter-spacing:-0.047px;left:904.6px;">Cause Department %</span>
<svg style="left:880px;top:315px;" width="210" height="205" viewBox="0 0 210 205"><path d="M106.51 98.19 L106.51 6.89 A91.3 91.3 0 0 1 183.60 49.27 Z" fill="#c6dcc0"/><path d="M109.00 102.25 L186.08 53.33 A91.3 91.3 0 0 1 189.00 146.23 Z" fill="#abcc9f"/><path d="M106.51 106.61 L186.52 150.59 A91.3 91.3 0 0 1 100.78 197.73 Z" fill="#8ab970"/><path d="M100.91 105.90 L95.18 197.02 A91.3 91.3 0 0 1 10.33 117.34 Z" fill="#6ba342"/><path d="M99.68 100.77 L9.10 112.22 A91.3 91.3 0 0 1 37.18 34.22 Z" fill="#5f963c"/><path d="M102.43 97.94 L39.93 31.38 A91.3 91.3 0 0 1 102.43 6.64 Z" fill="#4e7d32"/></svg>
<span class="t" style="top:346px;font-size:10.1px;line-height:10.1px;color:#404040;left:717.90px;width:600px;text-align:center;">Logistic</span>
<span class="t" style="top:358px;font-size:10.1px;line-height:10.1px;color:#404040;left:717.90px;width:600px;text-align:center;">s 16%</span>
<span class="t" style="top:407px;font-size:10.1px;line-height:10.1px;color:#404040;left:751.70px;width:600px;text-align:center;">Mainten</span>
<span class="t" style="top:419px;font-size:10.1px;line-height:10.1px;color:#404040;left:751.70px;width:600px;text-align:center;">ance</span>
<span class="t" style="top:431px;font-size:10.1px;line-height:10.1px;color:#404040;left:751.70px;width:600px;text-align:center;">17%</span>
<span class="t" style="top:476px;font-size:10.1px;line-height:10.1px;color:#404040;left:719.60px;width:600px;text-align:center;">Material</span>
<span class="t" style="top:488px;font-size:10.1px;line-height:10.1px;color:#404040;left:719.60px;width:600px;text-align:center;">18%</span>
<span class="t" style="top:460px;font-size:10.1px;line-height:10.1px;color:#404040;left:625.40px;width:600px;text-align:center;">Plannin</span>
<span class="t" style="top:472px;font-size:10.1px;line-height:10.1px;color:#404040;left:625.40px;width:600px;text-align:center;">g 22%</span>
<span class="t" style="top:379px;font-size:10.1px;line-height:10.1px;color:#404040;left:624.00px;width:600px;text-align:center;">Product</span>
<span class="t" style="top:393px;font-size:10.1px;line-height:10.1px;color:#404040;left:624.00px;width:600px;text-align:center;">ion 15%</span>
<span class="t" style="top:338px;font-size:10.1px;line-height:10.1px;color:#404040;left:656.60px;width:600px;text-align:center;">Quality</span>
<span class="t" style="top:350px;font-size:10.1px;line-height:10.1px;color:#404040;left:656.60px;width:600px;text-align:center;">12%</span>
<div style="left:1104px;top:236px;width:239px;height:141px;background:#fff;border:1px solid #a6a6a6;"></div>
<span class="t" style="top:242px;font-size:13px;line-height:13px;color:#111;font-weight:bold;letter-spacing:-0.396px;left:1112.6px;">Date</span>
<svg style="left:1319px;top:241px;" width="16" height="16" viewBox="0 0 16 16"><path d="M1 1.5 H11.5 L7.4 6 V9.5 L5.2 8.8 V6 Z" fill="#b4b4b4"/><path d="M7 8 L14.5 14.8 M14.5 8 L7 14.8" stroke="#b4b4b4" stroke-width="1.2"/></svg>
<div style="left:1111px;top:261px;width:223px;height:1px;background:#a6a6a6;"></div>
<span class="t" style="top:269px;font-size:9.5px;line-height:9.5px;color:#666;letter-spacing:-0.314px;left:1275.2px;">MONTHS</span>
<svg style="left:1324px;top:272px;" width="8" height="5" viewBox="0 0 8 5"><path d="M0.5 0.5 H7 L3.8 4 Z" fill="#888"/></svg>
<span class="t" style="top:291px;font-size:10px;line-height:10px;color:#777;letter-spacing:0.317px;left:1113.1px;">2020</span>
<span class="t" style="top:311px;font-size:9.5px;line-height:9.5px;color:#666;transform:scaleX(0.9191);transform-origin:left center;left:1113.1px;">JAN</span>
<span class="t" style="top:311px;font-size:9.5px;line-height:9.5px;color:#666;transform:scaleX(0.8656);transform-origin:left center;left:1160.5px;">FEB</span>
<span class="t" style="top:311px;font-size:9.5px;line-height:9.5px;color:#666;letter-spacing:-0.312px;left:1204.4px;">MAR</span>
<span class="t" style="top:311px;font-size:9.5px;line-height:9.5px;color:#666;transform:scaleX(0.9209);transform-origin:left center;left:1250.9px;">APR</span>
<span class="t" style="top:311px;font-size:9.5px;line-height:9.5px;color:#666;letter-spacing:0.055px;left:1296.2px;">MAY</span>
<div style="left:1112px;top:326px;width:46px;height:15.5px;background:#8fcfad;"></div>
<div style="left:1159px;top:326px;width:43px;height:15.5px;background:#8fcfad;"></div>
<div style="left:1203px;top:326px;width:46px;height:15.5px;background:#8fcfad;"></div>
<div style="left:1250px;top:326px;width:44px;height:15.5px;background:#8fcfad;"></div>
<div style="left:1295px;top:326px;width:39px;height:15.5px;background:#8fcfad;"></div>
<div style="left:1112px;top:350px;width:14px;height:14px;background:#fff;border:1px solid #c4c4c4;"></div>
<svg style="left:1115.5px;top:353px;" width="7" height="8" viewBox="0 0 7 8"><path d="M5.5 0.8 V7.2 L1 4 Z" fill="#666"/></svg>
<div style="left:1127px;top:350px;width:78px;height:14px;background:#fff;border:1px solid #bdbdbd;"></div>
<div style="left:1205px;top:353px;width:116px;height:7px;background:#dbefe5;"></div>
<div style="left:1321.5px;top:350px;width:13.5px;height:14px;background:#fff;border:1px solid #c4c4c4;"></div>
<svg style="left:1325px;top:353px;" width="7" height="8" viewBox="0 0 7 8"><path d="M1.5 0.8 V7.2 L6 4 Z" fill="#666"/></svg>
<div style="left:1105px;top:377px;width:94px;height:143px;background:#fff;"></div>
<div style="left:1106px;top:378px;width:92px;height:18px;background:#f0f0f0;border-top:1px solid #fafafa;border-left:1px solid #fafafa;border-right:1px solid #6a6a6a;border-bottom:1px solid #6a6a6a;box-shadow:inset -1px -1px 0 #a5a5a5;"></div>
<span class="t" style="top:381px;font-size:12.8px;line-height:12.8px;color:#111;letter-spacing:-0.273px;left:1120.9px;">Full Screen</span>
<div style="left:1106px;top:399px;width:92px;height:17.5px;background:#f0f0f0;border-top:1px solid #fafafa;border-left:1px solid #fafafa;border-right:1px solid #6a6a6a;border-bottom:1px solid #6a6a6a;box-shadow:inset -1px -1px 0 #a5a5a5;"></div>
<span class="t" style="top:402px;font-size:12.8px;line-height:12.8px;color:#111;letter-spacing:-0.282px;left:1114.8px;">Refresh Data</span>
<span class="t" style="top:429px;font-size:12.8px;line-height:12.8px;color:#111;letter-spacing:-0.014px;left:1107px;">Reporting...</span>
<div style="left:1106px;top:444.5px;width:92px;height:17px;background:#f0f0f0;border-top:1px solid #fafafa;border-left:1px solid #fafafa;border-right:1px solid #6a6a6a;border-bottom:1px solid #6a6a6a;box-shadow:inset -1px -1px 0 #a5a5a5;"></div>
<span class="t" style="top:447px;font-size:12.8px;line-height:12.8px;color:#111;letter-spacing:-0.429px;left:1132px;">Closed</span>
<div style="left:1106px;top:464px;width:92px;height:16.5px;background:#f0f0f0;border-top:1px solid #fafafa;border-left:1px solid #fafafa;border-right:1px solid #6a6a6a;border-bottom:1px solid #6a6a6a;box-shadow:inset -1px -1px 0 #a5a5a5;"></div>
<span class="t" style="top:467px;font-size:12.8px;line-height:12.8px;color:#111;letter-spacing:-0.214px;left:1119px;">In-Progress</span>
<div style="left:1106px;top:483.5px;width:92px;height:16px;background:#f0f0f0;border-top:1px solid #fafafa;border-left:1px solid #fafafa;border-right:1px solid #6a6a6a;border-bottom:1px solid #6a6a6a;box-shadow:inset -1px -1px 0 #a5a5a5;"></div>
<span class="t" style="top:486px;font-size:12.8px;line-height:12.8px;color:#111;letter-spacing:-0.204px;left:1135.7px;">Open</span>
<div style="left:1106px;top:502.5px;width:92px;height:16px;background:#f0f0f0;border-top:1px solid #fafafa;border-left:1px solid #fafafa;border-right:1px solid #6a6a6a;border-bottom:1px solid #6a6a6a;box-shadow:inset -1px -1px 0 #a5a5a5;"></div>
<span class="t" style="top:505px;font-size:12.8px;line-height:12.8px;color:#111;letter-spacing:-0.323px;left:1136.3px;">Clear</span>
<div style="left:1198px;top:377px;width:143px;height:142px;background:#fff;border:1px solid #a6a6a6;"></div>
<span class="t" style="top:384px;font-size:13px;line-height:13px;color:#111;transform:scaleX(0.9226);transform-origin:left center;left:1207px;">Cause Dep...</span>
<svg style="left:1283.5px;top:383px;" width="18" height="16" viewBox="0 0 18 16"><path d="M0.8 2.8 L2.8 4.8 L6.6 0.6 M0.8 8 L2.8 10 L6.6 5.8 M0.8 13 L2.8 15 L6.6 10.8" fill="none" stroke="#3b3b3b" stroke-width="1.1"/>
<path d="M8.5 2.6 H17 M8.5 7.8 H17 M8.5 12.9 H17" stroke="#3b3b3b" stroke-width="1.2"/></svg>
<svg style="left:1312.5px;top:383px;" width="18" height="18" viewBox="0 0 18 18"><path d="M0.8 0.8 H15.5 L9.8 7.5 V14 L6.5 11.8 V7.5 Z" fill="#fff" stroke="#b4b4b4" stroke-width="1.1"/>
<path d="M10.5 10 L16.5 16 M16.5 10 L10.5 16" stroke="#b4b4b4" stroke-width="1.2"/></svg>
<div style="left:1207px;top:403px;width:125px;height:1px;background:#a6a6a6;"></div>
<div style="left:1207px;top:405px;width:126px;height:105.5px;background:#fff;overflow:hidden;"><div style="left:0;top:3.3px;width:104px;height:23.5px;background:#8fcfad;border:1px solid #a0a8a4;border-radius:3.5px;"></div><div style="left:0;top:30.3px;width:104px;height:23.5px;background:#8fcfad;border:1px solid #a0a8a4;border-radius:3.5px;"></div><div style="left:0;top:57.3px;width:104px;height:23.5px;background:#8fcfad;border:1px solid #a0a8a4;border-radius:3.5px;"></div><div style="left:0;top:84.3px;width:104px;height:23.5px;background:#8fcfad;border:1px solid #a0a8a4;border-radius:3.5px;"></div></div>
<span class="t" style="top:413px;font-size:13px;line-height:13px;color:#111;letter-spacing:0.279px;left:1216.4px;">Material</span>
<span class="t" style="top:440px;font-size:13px;line-height:13px;color:#111;transform:scaleX(0.9247);transform-origin:left center;left:1216.4px;">Planning</span>
<span class="t" style="top:467px;font-size:13px;line-height:13px;color:#111;letter-spacing:-0.217px;left:1216.4px;">Production</span>
<span class="t" style="top:494px;font-size:13px;line-height:13px;color:#111;letter-spacing:-0.095px;left:1216.4px;">Quality</span>
<div style="left:1315px;top:408px;width:16.5px;height:103px;background:#f0f0f0;"></div>
<svg style="left:1318.5px;top:414px;" width="10" height="7" viewBox="0 0 10 7"><path d="M1.2 5.5 L5 1.7 L8.8 5.5" fill="none" stroke="#333" stroke-width="1.5"/></svg>
<div style="left:1315px;top:448px;width:16.5px;height:33px;background:#c9c9c9;"></div>
<svg style="left:1318.5px;top:497.5px;" width="10" height="7" viewBox="0 0 10 7"><path d="M1.2 1.5 L5 5.3 L8.8 1.5" fill="none" stroke="#333" stroke-width="1.5"/></svg>
<div style="left:1104px;top:293px;width:1px;height:227px;background:#a6a6a6;"></div>
<div style="left:1px;top:545px;width:1341.5px;height:445px;background:#fff;"></div>
<div style="left:424.5px;top:545px;width:119.5px;height:445px;background:#d9d9d9;"></div>
<div style="left:839.5px;top:545px;width:375.5px;height:445px;background:#d9d9d9;"></div>
<div style="left:1px;top:520px;width:1341.5px;height:25.5px;background:#4db17f;"></div>
<span class="t" style="top:527px;font-size:13.9px;line-height:13.9px;color:#fff;letter-spacing:-0.448px;left:2.4px;-webkit-text-stroke:0.55px #fff;">Date</span>
<span class="t" style="top:527px;font-size:13.9px;line-height:13.9px;color:#fff;letter-spacing:0.411px;left:87.6px;-webkit-text-stroke:0.55px #fff;">Line</span>
<span class="t" style="top:527px;font-size:13.9px;line-height:13.9px;color:#fff;letter-spacing:0.188px;left:172.3px;-webkit-text-stroke:0.55px #fff;">Product</span>
<span class="t" style="top:527px;font-size:13.9px;line-height:13.9px;color:#fff;letter-spacing:0.119px;left:258.2px;-webkit-text-stroke:0.55px #fff;">Stop Time</span>
<span class="t" style="top:527px;font-size:13.9px;line-height:13.9px;color:#fff;letter-spacing:0.078px;left:343.3px;-webkit-text-stroke:0.55px #fff;">Start Time</span>
<span class="t" style="top:527px;font-size:13.9px;line-height:13.9px;color:#fff;letter-spacing:-0.057px;left:427.3px;-webkit-text-stroke:0.55px #fff;">Lose Time (Hrs)</span>
<span class="t" style="top:527px;font-size:13.9px;line-height:13.9px;color:#fff;letter-spacing:0.027px;left:546.1px;-webkit-text-stroke:0.55px #fff;">Cause Department</span>
<span class="t" style="top:527px;font-size:13.9px;line-height:13.9px;color:#fff;letter-spacing:-0.207px;left:684.2px;-webkit-text-stroke:0.55px #fff;">Root Cause</span>
<span class="t" style="top:527px;font-size:13.9px;line-height:13.9px;color:#fff;letter-spacing:0.157px;left:842px;-webkit-text-stroke:0.55px #fff;">Operation Idle Cos</span>
<span class="t" style="top:527px;font-size:13.9px;line-height:13.9px;color:#fff;letter-spacing:0.048px;left:980.3px;-webkit-text-stroke:0.55px #fff;">Workers Idle Cos</span>
<span class="t" style="top:527px;font-size:13.9px;line-height:13.9px;color:#fff;letter-spacing:0.212px;left:1108px;-webkit-text-stroke:0.55px #fff;">Total Idle Cost</span>
<span class="t" style="top:527px;font-size:13.9px;line-height:13.9px;color:#fff;letter-spacing:0.118px;left:1217.9px;-webkit-text-stroke:0.55px #fff;">Countermeasure</span>
<div style="left:67px;top:527.5px;width:16px;height:16px;background:linear-gradient(#ffffff,#e9e9ef);border:1px solid #b5b5b5;"></div>
<svg style="left:71px;top:534px;" width="9" height="5" viewBox="0 0 9 5"><path d="M0.5 0.3 H8 L4.25 4.3 Z" fill="#505050"/></svg>
<div style="left:152px;top:527.5px;width:16px;height:16px;background:linear-gradient(#ffffff,#e9e9ef);border:1px solid #b5b5b5;"></div>
<svg style="left:156px;top:534px;" width="9" height="5" viewBox="0 0 9 5"><path d="M0.5 0.3 H8 L4.25 4.3 Z" fill="#505050"/></svg>
<div style="left:237px;top:527.5px;width:16px;height:16px;background:linear-gradient(#ffffff,#e9e9ef);border:1px solid #b5b5b5;"></div>
<svg style="left:241px;top:534px;" width="9" height="5" viewBox="0 0 9 5"><path d="M0.5 0.3 H8 L4.25 4.3 Z" fill="#505050"/></svg>
<div style="left:322px;top:527.5px;width:16px;height:16px;background:linear-gradient(#ffffff,#e9e9ef);border:1px solid #b5b5b5;"></div>
<svg style="left:326px;top:534px;" width="9" height="5" viewBox="0 0 9 5"><path d="M0.5 0.3 H8 L4.25 4.3 Z" fill="#505050"/></svg>
<div style="left:407px;top:527.5px;width:16px;height:16px;background:linear-gradient(#ffffff,#e9e9ef);border:1px solid #b5b5b5;"></div>
<svg style="left:411px;top:534px;" width="9" height="5" viewBox="0 0 9 5"><path d="M0.5 0.3 H8 L4.25 4.3 Z" fill="#505050"/></svg>
<div style="left:526px;top:527.5px;width:16px;height:16px;background:linear-gradient(#ffffff,#e9e9ef);border:1px solid #b5b5b5;"></div>
<svg style="left:530px;top:534px;" width="9" height="5" viewBox="0 0 9 5"><path d="M0.5 0.3 H8 L4.25 4.3 Z" fill="#505050"/></svg>
<div style="left:664px;top:527.5px;width:16px;height:16px;background:linear-gradient(#ffffff,#e9e9ef);border:1px solid #b5b5b5;"></div>
<svg style="left:668px;top:534px;" width="9" height="5" viewBox="0 0 9 5"><path d="M0.5 0.3 H8 L4.25 4.3 Z" fill="#505050"/></svg>
<div style="left:822px;top:527.5px;width:16px;height:16px;background:linear-gradient(#ffffff,#e9e9ef);border:1px solid #b5b5b5;"></div>
<svg style="left:826px;top:534px;" width="9" height="5" viewBox="0 0 9 5"><path d="M0.5 0.3 H8 L4.25 4.3 Z" fill="#505050"/></svg>
<div style="left:960px;top:527.5px;width:16px;height:16px;background:linear-gradient(#ffffff,#e9e9ef);border:1px solid #b5b5b5;"></div>
<svg style="left:964px;top:534px;" width="9" height="5" viewBox="0 0 9 5"><path d="M0.5 0.3 H8 L4.25 4.3 Z" fill="#505050"/></svg>
<div style="left:1086px;top:527.5px;width:16px;height:16px;background:linear-gradient(#ffffff,#e9e9ef);border:1px solid #b5b5b5;"></div>
<svg style="left:1090px;top:534px;" width="9" height="5" viewBox="0 0 9 5"><path d="M0.5 0.3 H8 L4.25 4.3 Z" fill="#505050"/></svg>
<div style="left:1197px;top:527.5px;width:16px;height:16px;background:linear-gradient(#ffffff,#e9e9ef);border:1px solid #b5b5b5;"></div>
<svg style="left:1201px;top:534px;" width="9" height="5" viewBox="0 0 9 5"><path d="M0.5 0.3 H8 L4.25 4.3 Z" fill="#505050"/></svg>
<div style="left:1325px;top:527.5px;width:16px;height:16px;background:linear-gradient(#ffffff,#e9e9ef);border:1px solid #b5b5b5;"></div>
<svg style="left:1329px;top:534px;" width="9" height="5" viewBox="0 0 9 5"><path d="M0.5 0.3 H8 L4.25 4.3 Z" fill="#505050"/></svg>
<div style="left:0px;top:545px;width:1343px;height:445px;overflow:hidden;"><div style="left:1215px;top:0px;width:127.5px;height:19px;background:#ffeb9c;"></div><span class="t c" style="top:5px;left:1.8px;color:#000;">17-Oct-20</span><span class="t c" style="top:5px;left:87.6px;color:#000;">line 2</span><span class="t c" style="top:5px;left:172.3px;color:#000;">DBA</span><span class="t c" style="top:5px;right:1006px;color:#000;">8:25</span><span class="t c" style="top:5px;right:921px;color:#000;">10:00</span><span class="t c" style="top:5px;left:384.3px;width:200px;text-align:center;color:#000;">1.6</span><span class="t c" style="top:5px;left:546.1px;color:#000;">Logistics</span><span class="t c" style="top:5px;left:684.2px;color:#000;">Machine problem</span><span class="t c" style="top:5px;right:372.29999999999995px;color:#000;">1,742</span><span class="t c" style="top:5px;right:245px;color:#000;">776</span><span class="t c" style="top:5px;right:134px;color:#000;">2,518</span><span class="t c" style="top:5px;left:1217.9px;color:#9c5700;">In-progress</span><div style="left:1215px;top:19px;width:127.5px;height:19px;background:#ffeb9c;"></div><span class="t c" style="top:24px;left:1.8px;color:#000;">8-Jun-20</span><span class="t c" style="top:24px;left:87.6px;color:#000;">line 2</span><span class="t c" style="top:24px;left:172.3px;color:#000;">CCC</span><span class="t c" style="top:24px;right:1006px;color:#000;">10:10</span><span class="t c" style="top:24px;right:921px;color:#000;">10:30</span><span class="t c" style="top:24px;left:384.3px;width:200px;text-align:center;color:#000;">0.3</span><span class="t c" style="top:24px;left:546.1px;color:#000;">Material</span><span class="t c" style="top:24px;left:684.2px;color:#000;">Quality issue</span><span class="t c" style="top:24px;right:372.29999999999995px;color:#000;">367</span><span class="t c" style="top:24px;right:245px;color:#000;">128</span><span class="t c" style="top:24px;right:134px;color:#000;">495</span><span class="t c" style="top:24px;left:1217.9px;color:#9c5700;">In-progress</span><div style="left:1215px;top:38px;width:127.5px;height:19px;background:#ffc7ce;"></div><span class="t c" style="top:43px;left:1.8px;color:#000;">2-Oct-20</span><span class="t c" style="top:43px;left:87.6px;color:#000;">line 3</span><span class="t c" style="top:43px;left:172.3px;color:#000;">CCC</span><span class="t c" style="top:43px;right:1006px;color:#000;">9:35</span><span class="t c" style="top:43px;right:921px;color:#000;">11:00</span><span class="t c" style="top:43px;left:384.3px;width:200px;text-align:center;color:#000;">1.4</span><span class="t c" style="top:43px;left:546.1px;color:#000;">Maintenance</span><span class="t c" style="top:43px;left:684.2px;color:#000;">Material delay</span><span class="t c" style="top:43px;right:372.29999999999995px;color:#000;">992</span><span class="t c" style="top:43px;right:245px;color:#000;">545</span><span class="t c" style="top:43px;right:134px;color:#000;">1,537</span><span class="t c" style="top:43px;left:1217.9px;color:#9c0006;">Open</span><div style="left:1215px;top:57px;width:127.5px;height:19px;background:#ffeb9c;"></div><span class="t c" style="top:62px;left:1.8px;color:#000;">30-Aug-20</span><span class="t c" style="top:62px;left:87.6px;color:#000;">line 2</span><span class="t c" style="top:62px;left:172.3px;color:#000;">AAA</span><span class="t c" style="top:62px;right:1006px;color:#000;">11:00</span><span class="t c" style="top:62px;right:921px;color:#000;">12:24</span><span class="t c" style="top:62px;left:384.3px;width:200px;text-align:center;color:#000;">1.4</span><span class="t c" style="top:62px;left:546.1px;color:#000;">Quality</span><span class="t c" style="top:62px;left:684.2px;color:#000;">Material delay</span><span class="t c" style="top:62px;right:372.29999999999995px;color:#000;">1,540</span><span class="t c" style="top:62px;right:245px;color:#000;">441</span><span class="t c" style="top:62px;right:134px;color:#000;">1,981</span><span class="t c" style="top:62px;left:1217.9px;color:#9c5700;">In-progress</span><div style="left:1215px;top:76px;width:127.5px;height:19px;background:#c6efce;"></div><span class="t c" style="top:81px;left:1.8px;color:#000;">10-May-20</span><span class="t c" style="top:81px;left:87.6px;color:#000;">line 3</span><span class="t c" style="top:81px;left:172.3px;color:#000;">DBA</span><span class="t c" style="top:81px;right:1006px;color:#000;">9:00</span><span class="t c" style="top:81px;right:921px;color:#000;">10:00</span><span class="t c" style="top:81px;left:384.3px;width:200px;text-align:center;color:#000;">1.0</span><span class="t c" style="top:81px;left:546.1px;color:#000;">Logistics</span><span class="t c" style="top:81px;left:684.2px;color:#000;">Sudden plan change</span><span class="t c" style="top:81px;right:372.29999999999995px;color:#000;">700</span><span class="t c" style="top:81px;right:245px;color:#000;">490</span><span class="t c" style="top:81px;right:134px;color:#000;">1,190</span><span class="t c" style="top:81px;left:1217.9px;color:#006100;">Closed</span><div style="left:1215px;top:95px;width:127.5px;height:19px;background:#ffeb9c;"></div><span class="t c" style="top:100px;left:1.8px;color:#000;">5-Sep-20</span><span class="t c" style="top:100px;left:87.6px;color:#000;">line 2</span><span class="t c" style="top:100px;left:172.3px;color:#000;">ABC</span><span class="t c" style="top:100px;right:1006px;color:#000;">13:00</span><span class="t c" style="top:100px;right:921px;color:#000;">13:50</span><span class="t c" style="top:100px;left:384.3px;width:200px;text-align:center;color:#000;">0.8</span><span class="t c" style="top:100px;left:546.1px;color:#000;">Material</span><span class="t c" style="top:100px;left:684.2px;color:#000;">Workers shortage</span><span class="t c" style="top:100px;right:372.29999999999995px;color:#000;">917</span><span class="t c" style="top:100px;right:245px;color:#000;">292</span><span class="t c" style="top:100px;right:134px;color:#000;">1,208</span><span class="t c" style="top:100px;left:1217.9px;color:#9c5700;">In-progress</span><div style="left:1215px;top:114px;width:127.5px;height:19px;background:#ffc7ce;"></div><span class="t c" style="top:119px;left:1.8px;color:#000;">29-Jan-20</span><span class="t c" style="top:119px;left:87.6px;color:#000;">line 1</span><span class="t c" style="top:119px;left:172.3px;color:#000;">CFD</span><span class="t c" style="top:119px;right:1006px;color:#000;">12:00</span><span class="t c" style="top:119px;right:921px;color:#000;">12:30</span><span class="t c" style="top:119px;left:384.3px;width:200px;text-align:center;color:#000;">0.5</span><span class="t c" style="top:119px;left:546.1px;color:#000;">Material</span><span class="t c" style="top:119px;left:684.2px;color:#000;">Wrong material release</span><span class="t c" style="top:119px;right:372.29999999999995px;color:#000;">450</span><span class="t c" style="top:119px;right:245px;color:#000;">140</span><span class="t c" style="top:119px;right:134px;color:#000;">590</span><span class="t c" style="top:119px;left:1217.9px;color:#9c0006;">Open</span><div style="left:1215px;top:133px;width:127.5px;height:19px;background:#ffc7ce;"></div><span class="t c" style="top:138px;left:1.8px;color:#000;">25-May-20</span><span class="t c" style="top:138px;left:87.6px;color:#000;">line 1</span><span class="t c" style="top:138px;left:172.3px;color:#000;">CFD</span><span class="t c" style="top:138px;right:1006px;color:#000;">14:20</span><span class="t c" style="top:138px;right:921px;color:#000;">14:50</span><span class="t c" style="top:138px;left:384.3px;width:200px;text-align:center;color:#000;">0.5</span><span class="t c" style="top:138px;left:546.1px;color:#000;">Logistics</span><span class="t c" style="top:138px;left:684.2px;color:#000;">Material delay</span><span class="t c" style="top:138px;right:372.29999999999995px;color:#000;">450</span><span class="t c" style="top:138px;right:245px;color:#000;">140</span><span class="t c" style="top:138px;right:134px;color:#000;">590</span><span class="t c" style="top:138px;left:1217.9px;color:#9c0006;">Open</span><div style="left:1215px;top:152px;width:127.5px;height:19px;background:#c6efce;"></div><span class="t c" style="top:157px;left:1.8px;color:#000;">23-Apr-20</span><span class="t c" style="top:157px;left:87.6px;color:#000;">line 3</span><span class="t c" style="top:157px;left:172.3px;color:#000;">ABB</span><span class="t c" style="top:157px;right:1006px;color:#000;">8:30</span><span class="t c" style="top:157px;right:921px;color:#000;">9:30</span><span class="t c" style="top:157px;left:384.3px;width:200px;text-align:center;color:#000;">1.0</span><span class="t c" style="top:157px;left:546.1px;color:#000;">Material</span><span class="t c" style="top:157px;left:684.2px;color:#000;">Material delay</span><span class="t c" style="top:157px;right:372.29999999999995px;color:#000;">700</span><span class="t c" style="top:157px;right:245px;color:#000;">420</span><span class="t c" style="top:157px;right:134px;color:#000;">1,120</span><span class="t c" style="top:157px;left:1217.9px;color:#006100;">Closed</span><div style="left:1215px;top:171px;width:127.5px;height:19px;background:#ffeb9c;"></div><span class="t c" style="top:176px;left:1.8px;color:#000;">15-May-20</span><span class="t c" style="top:176px;left:87.6px;color:#000;">line 3</span><span class="t c" style="top:176px;left:172.3px;color:#000;">ABC</span><span class="t c" style="top:176px;right:1006px;color:#000;">10:00</span><span class="t c" style="top:176px;right:921px;color:#000;">11:00</span><span class="t c" style="top:176px;left:384.3px;width:200px;text-align:center;color:#000;">1.0</span><span class="t c" style="top:176px;left:546.1px;color:#000;">Production</span><span class="t c" style="top:176px;left:684.2px;color:#000;">Workers shortage</span><span class="t c" style="top:176px;right:372.29999999999995px;color:#000;">700</span><span class="t c" style="top:176px;right:245px;color:#000;">350</span><span class="t c" style="top:176px;right:134px;color:#000;">1,050</span><span class="t c" style="top:176px;left:1217.9px;color:#9c5700;">In-progress</span><div style="left:1215px;top:190px;width:127.5px;height:19px;background:#ffc7ce;"></div><span class="t c" style="top:195px;left:1.8px;color:#000;">21-Jul-20</span><span class="t c" style="top:195px;left:87.6px;color:#000;">line 2</span><span class="t c" style="top:195px;left:172.3px;color:#000;">AAA</span><span class="t c" style="top:195px;right:1006px;color:#000;">8:05</span><span class="t c" style="top:195px;right:921px;color:#000;">9:50</span><span class="t c" style="top:195px;left:384.3px;width:200px;text-align:center;color:#000;">1.8</span><span class="t c" style="top:195px;left:546.1px;color:#000;">Logistics</span><span class="t c" style="top:195px;left:684.2px;color:#000;">Wrong material release</span><span class="t c" style="top:195px;right:372.29999999999995px;color:#000;">1,925</span><span class="t c" style="top:195px;right:245px;color:#000;">551</span><span class="t c" style="top:195px;right:134px;color:#000;">2,476</span><span class="t c" style="top:195px;left:1217.9px;color:#9c0006;">Open</span><div style="left:1215px;top:209px;width:127.5px;height:19px;background:#c6efce;"></div><span class="t c" style="top:214px;left:1.8px;color:#000;">12-Nov-20</span><span class="t c" style="top:214px;left:87.6px;color:#000;">line 1</span><span class="t c" style="top:214px;left:172.3px;color:#000;">DBA</span><span class="t c" style="top:214px;right:1006px;color:#000;">12:00</span><span class="t c" style="top:214px;right:921px;color:#000;">14:50</span><span class="t c" style="top:214px;left:384.3px;width:200px;text-align:center;color:#000;">2.8</span><span class="t c" style="top:214px;left:546.1px;color:#000;">Planning</span><span class="t c" style="top:214px;left:684.2px;color:#000;">Sudden plan change</span><span class="t c" style="top:214px;right:372.29999999999995px;color:#000;">2,550</span><span class="t c" style="top:214px;right:245px;color:#000;">1,388</span><span class="t c" style="top:214px;right:134px;color:#000;">3,938</span><span class="t c" style="top:214px;left:1217.9px;color:#006100;">Closed</span><div style="left:1215px;top:228px;width:127.5px;height:19px;background:#c6efce;"></div><span class="t c" style="top:233px;left:1.8px;color:#000;">3-Feb-20</span><span class="t c" style="top:233px;left:87.6px;color:#000;">line 2</span><span class="t c" style="top:233px;left:172.3px;color:#000;">ABC</span><span class="t c" style="top:233px;right:1006px;color:#000;">14:20</span><span class="t c" style="top:233px;right:921px;color:#000;">14:50</span><span class="t c" style="top:233px;left:384.3px;width:200px;text-align:center;color:#000;">0.5</span><span class="t c" style="top:233px;left:546.1px;color:#000;">Material</span><span class="t c" style="top:233px;left:684.2px;color:#000;">Material preparation</span><span class="t c" style="top:233px;right:372.29999999999995px;color:#000;">550</span><span class="t c" style="top:233px;right:245px;color:#000;">175</span><span class="t c" style="top:233px;right:134px;color:#000;">725</span><span class="t c" style="top:233px;left:1217.9px;color:#006100;">Closed</span><div style="left:1215px;top:247px;width:127.5px;height:19px;background:#ffeb9c;"></div><span class="t c" style="top:252px;left:1.8px;color:#000;">11-May-20</span><span class="t c" style="top:252px;left:87.6px;color:#000;">line 2</span><span class="t c" style="top:252px;left:172.3px;color:#000;">ABC</span><span class="t c" style="top:252px;right:1006px;color:#000;">9:00</span><span class="t c" style="top:252px;right:921px;color:#000;">10:00</span><span class="t c" style="top:252px;left:384.3px;width:200px;text-align:center;color:#000;">1.0</span><span class="t c" style="top:252px;left:546.1px;color:#000;">Quality</span><span class="t c" style="top:252px;left:684.2px;color:#000;">Quality issue</span><span class="t c" style="top:252px;right:372.29999999999995px;color:#000;">1,100</span><span class="t c" style="top:252px;right:245px;color:#000;">350</span><span class="t c" style="top:252px;right:134px;color:#000;">1,450</span><span class="t c" style="top:252px;left:1217.9px;color:#9c5700;">In-progress</span><div style="left:1215px;top:266px;width:127.5px;height:19px;background:#ffc7ce;"></div><span class="t c" style="top:271px;left:1.8px;color:#000;">13-Oct-20</span><span class="t c" style="top:271px;left:87.6px;color:#000;">line 3</span><span class="t c" style="top:271px;left:172.3px;color:#000;">CFD</span><span class="t c" style="top:271px;right:1006px;color:#000;">10:10</span><span class="t c" style="top:271px;right:921px;color:#000;">12:30</span><span class="t c" style="top:271px;left:384.3px;width:200px;text-align:center;color:#000;">2.3</span><span class="t c" style="top:271px;left:546.1px;color:#000;">Logistics</span><span class="t c" style="top:271px;left:684.2px;color:#000;">Material delay</span><span class="t c" style="top:271px;right:372.29999999999995px;color:#000;">1,633</span><span class="t c" style="top:271px;right:245px;color:#000;">653</span><span class="t c" style="top:271px;right:134px;color:#000;">2,287</span><span class="t c" style="top:271px;left:1217.9px;color:#9c0006;">Open</span><div style="left:1215px;top:285px;width:127.5px;height:19px;background:#ffc7ce;"></div><span class="t c" style="top:290px;left:1.8px;color:#000;">27-Jun-20</span><span class="t c" style="top:290px;left:87.6px;color:#000;">line 1</span><span class="t c" style="top:290px;left:172.3px;color:#000;">ABB</span><span class="t c" style="top:290px;right:1006px;color:#000;">8:30</span><span class="t c" style="top:290px;right:921px;color:#000;">10:00</span><span class="t c" style="top:290px;left:384.3px;width:200px;text-align:center;color:#000;">1.5</span><span class="t c" style="top:290px;left:546.1px;color:#000;">Material</span><span class="t c" style="top:290px;left:684.2px;color:#000;">Material preparation</span><span class="t c" style="top:290px;right:372.29999999999995px;color:#000;">1,350</span><span class="t c" style="top:290px;right:245px;color:#000;">630</span><span class="t c" style="top:290px;right:134px;color:#000;">1,980</span><span class="t c" style="top:290px;left:1217.9px;color:#9c0006;">Open</span><div style="left:1215px;top:304px;width:127.5px;height:19px;background:#c6efce;"></div><span class="t c" style="top:309px;left:1.8px;color:#000;">28-Sep-20</span><span class="t c" style="top:309px;left:87.6px;color:#000;">line 1</span><span class="t c" style="top:309px;left:172.3px;color:#000;">DDC</span><span class="t c" style="top:309px;right:1006px;color:#000;">10:00</span><span class="t c" style="top:309px;right:921px;color:#000;">12:30</span><span class="t c" style="top:309px;left:384.3px;width:200px;text-align:center;color:#000;">2.5</span><span class="t c" style="top:309px;left:546.1px;color:#000;">Maintenance</span><span class="t c" style="top:309px;left:684.2px;color:#000;">No spare parts</span><span class="t c" style="top:309px;right:372.29999999999995px;color:#000;">2,250</span><span class="t c" style="top:309px;right:245px;color:#000;">1,050</span><span class="t c" style="top:309px;right:134px;color:#000;">3,300</span><span class="t c" style="top:309px;left:1217.9px;color:#006100;">Closed</span><div style="left:1215px;top:323px;width:127.5px;height:19px;background:#ffeb9c;"></div><span class="t c" style="top:328px;left:1.8px;color:#000;">16-Jul-20</span><span class="t c" style="top:328px;left:87.6px;color:#000;">line 3</span><span class="t c" style="top:328px;left:172.3px;color:#000;">CCC</span><span class="t c" style="top:328px;right:1006px;color:#000;">8:30</span><span class="t c" style="top:328px;right:921px;color:#000;">11:00</span><span class="t c" style="top:328px;left:384.3px;width:200px;text-align:center;color:#000;">2.5</span><span class="t c" style="top:328px;left:546.1px;color:#000;">Planning</span><span class="t c" style="top:328px;left:684.2px;color:#000;">Sudden plan change</span><span class="t c" style="top:328px;right:372.29999999999995px;color:#000;">1,750</span><span class="t c" style="top:328px;right:245px;color:#000;">963</span><span class="t c" style="top:328px;right:134px;color:#000;">2,713</span><span class="t c" style="top:328px;left:1217.9px;color:#9c5700;">In-progress</span><div style="left:1215px;top:342px;width:127.5px;height:19px;background:#c6efce;"></div><span class="t c" style="top:347px;left:1.8px;color:#000;">14-Jul-20</span><span class="t c" style="top:347px;left:87.6px;color:#000;">line 1</span><span class="t c" style="top:347px;left:172.3px;color:#000;">CCC</span><span class="t c" style="top:347px;right:1006px;color:#000;">9:00</span><span class="t c" style="top:347px;right:921px;color:#000;">9:30</span><span class="t c" style="top:347px;left:384.3px;width:200px;text-align:center;color:#000;">0.5</span><span class="t c" style="top:347px;left:546.1px;color:#000;">Material</span><span class="t c" style="top:347px;left:684.2px;color:#000;">Machine problem</span><span class="t c" style="top:347px;right:372.29999999999995px;color:#000;">450</span><span class="t c" style="top:347px;right:245px;color:#000;">193</span><span class="t c" style="top:347px;right:134px;color:#000;">642</span><span class="t c" style="top:347px;left:1217.9px;color:#006100;">Closed</span><div style="left:1215px;top:361px;width:127.5px;height:19px;background:#c6efce;"></div><span class="t c" style="top:366px;left:1.8px;color:#000;">22-Nov-20</span><span class="t c" style="top:366px;left:87.6px;color:#000;">line 2</span><span class="t c" style="top:366px;left:172.3px;color:#000;">CFD</span><span class="t c" style="top:366px;right:1006px;color:#000;">9:00</span><span class="t c" style="top:366px;right:921px;color:#000;">10:30</span><span class="t c" style="top:366px;left:384.3px;width:200px;text-align:center;color:#000;">1.5</span><span class="t c" style="top:366px;left:546.1px;color:#000;">Planning</span><span class="t c" style="top:366px;left:684.2px;color:#000;">Sudden plan change</span><span class="t c" style="top:366px;right:372.29999999999995px;color:#000;">1,650</span><span class="t c" style="top:366px;right:245px;color:#000;">420</span><span class="t c" style="top:366px;right:134px;color:#000;">2,070</span><span class="t c" style="top:366px;left:1217.9px;color:#006100;">Closed</span><div style="left:1215px;top:380px;width:127.5px;height:19px;background:#ffc7ce;"></div><span class="t c" style="top:385px;left:1.8px;color:#000;">8-Jul-20</span><span class="t c" style="top:385px;left:87.6px;color:#000;">line 1</span><span class="t c" style="top:385px;left:172.3px;color:#000;">ABC</span><span class="t c" style="top:385px;right:1006px;color:#000;">9:00</span><span class="t c" style="top:385px;right:921px;color:#000;">10:30</span><span class="t c" style="top:385px;left:384.3px;width:200px;text-align:center;color:#000;">1.5</span><span class="t c" style="top:385px;left:546.1px;color:#000;">Material</span><span class="t c" style="top:385px;left:684.2px;color:#000;">Material delay</span><span class="t c" style="top:385px;right:372.29999999999995px;color:#000;">1,350</span><span class="t c" style="top:385px;right:245px;color:#000;">525</span><span class="t c" style="top:385px;right:134px;color:#000;">1,875</span><span class="t c" style="top:385px;left:1217.9px;color:#9c0006;">Open</span><div style="left:1215px;top:399px;width:127.5px;height:19px;background:#ffeb9c;"></div><span class="t c" style="top:404px;left:1.8px;color:#000;">24-Sep-20</span><span class="t c" style="top:404px;left:87.6px;color:#000;">line 1</span><span class="t c" style="top:404px;left:172.3px;color:#000;">ABC</span><span class="t c" style="top:404px;right:1006px;color:#000;">8:30</span><span class="t c" style="top:404px;right:921px;color:#000;">11:00</span><span class="t c" style="top:404px;left:384.3px;width:200px;text-align:center;color:#000;">2.5</span><span class="t c" style="top:404px;left:546.1px;color:#000;">Material</span><span class="t c" style="top:404px;left:684.2px;color:#000;">Material preparation</span><span class="t c" style="top:404px;right:372.29999999999995px;color:#000;">2,250</span><span class="t c" style="top:404px;right:245px;color:#000;">875</span><span class="t c" style="top:404px;right:134px;color:#000;">3,125</span><span class="t c" style="top:404px;left:1217.9px;color:#9c5700;">In-progress</span><div style="left:1215px;top:418px;width:127.5px;height:19px;background:#ffeb9c;"></div><span class="t c" style="top:423px;left:1.8px;color:#000;">20-Aug-20</span><span class="t c" style="top:423px;left:87.6px;color:#000;">line 2</span><span class="t c" style="top:423px;left:172.3px;color:#000;">ABC</span><span class="t c" style="top:423px;right:1006px;color:#000;">8:25</span><span class="t c" style="top:423px;right:921px;color:#000;">11:00</span><span class="t c" style="top:423px;left:384.3px;width:200px;text-align:center;color:#000;">2.6</span><span class="t c" style="top:423px;left:546.1px;color:#000;">Production</span><span class="t c" style="top:423px;left:684.2px;color:#000;">Workers shortage</span><span class="t c" style="top:423px;right:372.29999999999995px;color:#000;">2,842</span><span class="t c" style="top:423px;right:245px;color:#000;">904</span><span class="t c" style="top:423px;right:134px;color:#000;">3,746</span><span class="t c" style="top:423px;left:1217.9px;color:#9c5700;">In-progress</span><div style="left:1215px;top:437px;width:127.5px;height:19px;background:#c6efce;"></div><span class="t c" style="top:442px;left:1.8px;color:#000;">19-Nov-20</span><span class="t c" style="top:442px;left:87.6px;color:#000;">line 1</span><span class="t c" style="top:442px;left:172.3px;color:#000;">AAA</span><span class="t c" style="top:442px;right:1006px;color:#000;">9:00</span><span class="t c" style="top:442px;right:921px;color:#000;">9:30</span><span class="t c" style="top:442px;left:384.3px;width:200px;text-align:center;color:#000;">0.5</span><span class="t c" style="top:442px;left:546.1px;color:#000;">Maintenance</span><span class="t c" style="top:442px;left:684.2px;color:#000;">Machine problem</span><span class="t c" style="top:442px;right:372.29999999999995px;color:#000;">450</span><span class="t c" style="top:442px;right:245px;color:#000;">158</span><span class="t c" style="top:442px;right:134px;color:#000;">607</span><span class="t c" style="top:442px;left:1217.9px;color:#006100;">Closed</span></div>
<div style="left:1px;top:545px;width:1896px;height:1px;background:#9b9b9b;"></div>
<div style="left:0px;top:991px;width:1918px;height:27px;background:#e6e6e6;"></div>
<svg style="left:26px;top:998px;" width="7" height="10" viewBox="0 0 7 10"><path d="M5.5 1 V9 L1 5 Z" fill="#c3c3c3"/></svg>
<svg style="left:54px;top:998px;" width="7" height="10" viewBox="0 0 7 10"><path d="M1.5 1 V9 L6 5 Z" fill="#c3c3c3"/></svg>
<div style="left:100px;top:993px;width:1px;height:21px;background:#ababab;"></div>
<div style="left:103px;top:993px;width:96.5px;height:21.5px;background:#c00000;"></div>
<span class="t" style="top:998px;font-size:12.5px;line-height:12.5px;color:#fff;letter-spacing:0.334px;left:115.2px;">Introduction</span>
<div style="left:201px;top:990px;width:138px;height:24.5px;background:#fff;border-left:1px solid #c8c8c8;border-right:1px solid #c8c8c8;"></div>
<div style="left:201px;top:1012.5px;width:138px;height:2px;background:#217346;"></div>
<span class="t" style="top:998px;font-size:12.5px;line-height:12.5px;color:#217346;font-weight:bold;letter-spacing:0.295px;left:212.8px;">Idle Time Analysis</span>
<div style="left:340.5px;top:993px;width:75.5px;height:21.5px;background:#8fcfad;"></div>
<span class="t" style="top:998px;font-size:12.5px;line-height:12.5px;color:#222;letter-spacing:0.212px;left:351px;">Database</span>
<div style="left:418px;top:993px;width:1px;height:21px;background:#ababab;"></div>
<svg style="left:451px;top:995px;" width="18" height="18" viewBox="0 0 18 18"><circle cx="9" cy="9" r="7.5" fill="none" stroke="#5f5f5f" stroke-width="1.2"/><path d="M9 5 V13 M5 9 H13" stroke="#5f5f5f" stroke-width="1.4"/></svg>
<div style="left:1151.5px;top:999px;width:1.5px;height:1.5px;background:#999;"></div>
<div style="left:1151.5px;top:1003px;width:1.5px;height:1.5px;background:#999;"></div>
<div style="left:1151.5px;top:1007px;width:1.5px;height:1.5px;background:#999;"></div>
<div style="left:1169px;top:997.5px;width:14px;height:14px;background:#fff;border:1px solid #ababab;"></div>
<svg style="left:1172.5px;top:1000.5px;" width="7" height="8" viewBox="0 0 7 8"><path d="M5.5 0.8 V7.2 L1 4 Z" fill="#666"/></svg>
<div style="left:1185px;top:997.5px;width:696px;height:14px;background:#fff;border:1px solid #ababab;"></div>
<div style="left:1882px;top:997.5px;width:14px;height:14px;background:#fff;border:1px solid #ababab;"></div>
<svg style="left:1885.5px;top:1000.5px;" width="7" height="8" viewBox="0 0 7 8"><path d="M1.5 0.8 V7.2 L6 4 Z" fill="#666"/></svg>
<div style="left:0px;top:1018px;width:1918px;height:21px;background:#f3f2f1;border-top:1px solid #d0cecc;"></div>
<div style="left:1626px;top:1019px;width:40px;height:20px;background:#c8c6c4;"></div>
<svg style="left:1639px;top:1022px;" width="14" height="14" viewBox="0 0 14 14"><rect x="0.7" y="0.7" width="12.6" height="12.6" fill="none" stroke="#2b2b2b" stroke-width="1.4"/><path d="M0.6 4.9 H13.4 M0.6 9.1 H13.4 M4.9 0.6 V13.4 M9.1 0.6 V13.4" stroke="#2b2b2b" stroke-width="1.4"/></svg>
<svg style="left:1679px;top:1022px;" width="15" height="14" viewBox="0 0 15 14"><rect x="0.6" y="0.6" width="13.8" height="12.8" fill="none" stroke="#444" stroke-width="1.1"/><rect x="4" y="3.5" width="7" height="7.5" fill="none" stroke="#444" stroke-width="1"/><path d="M5.5 6 H9.5 M5.5 8.5 H9.5" stroke="#444" stroke-width="0.9"/></svg>
<svg style="left:1718px;top:1022px;" width="16" height="14" viewBox="0 0 16 14"><path d="M0.6 0.6 H14.4 V13.4 H0.6 Z M0.6 8.5 H9.5 V0.6 M5 0.6 V8.5" fill="none" stroke="#444" stroke-width="1.1"/></svg>
<div style="left:1752px;top:1029px;width:8px;height:1px;background:#444;"></div>
<div style="left:1765px;top:1029px;width:100px;height:1px;background:#a0a0a0;"></div>
<div style="left:1810px;top:1024px;width:5px;height:11px;background:#6b6b6b;"></div>
<div style="left:1870px;top:1029px;width:8px;height:1px;background:#444;"></div>
<div style="left:1873.5px;top:1025.5px;width:1px;height:8px;background:#444;"></div>
<span class="t" style="top:1024px;font-size:11.5px;line-height:11.5px;color:#444;transform:scaleX(0.8901);transform-origin:left center;left:1891px;">95%</span>
</div></body></html>
